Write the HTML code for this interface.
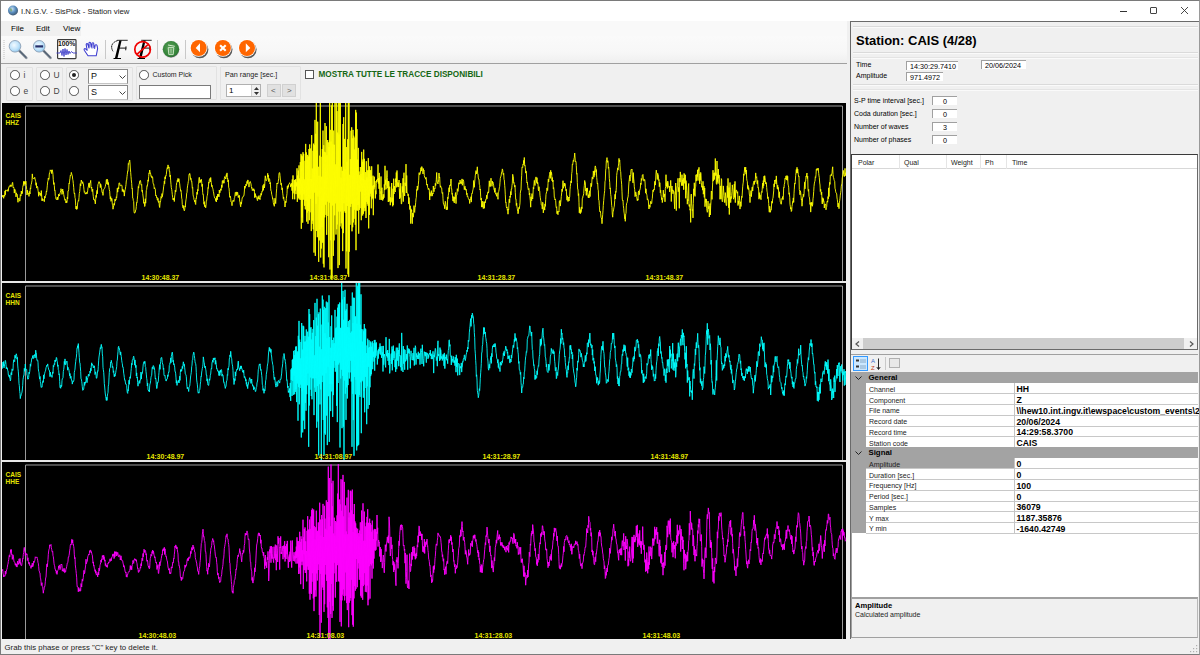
<!DOCTYPE html>
<html><head><meta charset="utf-8">
<style>
*{margin:0;padding:0;box-sizing:border-box}
html,body{width:1200px;height:655px;overflow:hidden;background:#f0f0f0;font-family:"Liberation Sans",sans-serif;color:#000}
.a{position:absolute}
.t{position:absolute;white-space:nowrap;line-height:1}
#win{position:absolute;left:0;top:0;width:1200px;height:655px;border:1px solid #7a7a7a;border-right-color:#9a9a9a;background:#f0f0f0;overflow:hidden}
#title{left:0;top:0;width:1198px;height:20px;background:#fff}
#menu{left:0;top:20px;width:846px;height:16px;background:linear-gradient(to right,#f0f0f0 0,#f0f0f0 80px,#f9f9f9 80px)}
#tool{left:0;top:35px;width:846px;height:28px;background:linear-gradient(#fafafa,#f7f7f7 60%,#efefef);border-bottom:1px solid #a0a0a0}
.sep{position:absolute;top:4px;width:1px;height:20px;background:#c8c8c8}
.grp{position:absolute;border:1px solid #e2e2e2;border-radius:1px}
.rad{position:absolute;width:9.5px;height:9.5px;border:1px solid #505050;border-radius:50%;background:#fff}
.combo{position:absolute;width:40px;height:15px;background:#fff;border:1px solid #7a7a7a}
.panel{position:absolute;left:1px;width:844px;background:#000;overflow:hidden}
.inner{position:absolute;left:24px;top:2px;width:820px;border:1px solid #a0a0a0;border-right-color:#c8c8c8}
.lbl{position:absolute;left:4px;font:bold 6.5px "Liberation Sans",sans-serif;color:#e6e600;line-height:7.5px}
.tm{position:absolute;font:bold 7px "Liberation Sans",sans-serif;color:#e6e600;white-space:nowrap}
#right{left:849px;top:20px;width:350px;height:618px;border-left:1px solid #6a6a6a;border-top:1px solid #6a6a6a;background:#f0f0f0}
.etch{position:absolute;left:2px;width:345px;border-top:1px solid #dadada;border-bottom:1px solid #fafafa}
.rl{position:absolute;font-size:8px;white-space:nowrap;line-height:1}
.box{position:absolute;background:#fff;border-left:1px solid #a0a0a0;border-top:1px solid #a0a0a0;font-size:8.5px;line-height:9px;padding-left:3px;white-space:nowrap}
#status{left:0;top:638px;width:1198px;height:15px;background:#f0f0f0}
</style></head><body>
<div id="win">
 <div id="title" class="a">
  <svg class="a" style="left:6px;top:4px" width="12" height="12" viewBox="0 0 12 12"><defs><radialGradient id="gl" cx="0.4" cy="0.35" r="0.7"><stop offset="0" stop-color="#cfe6f7"/><stop offset="0.5" stop-color="#5b8fc0"/><stop offset="1" stop-color="#3a4f66"/></radialGradient></defs><circle cx="6" cy="5.5" r="5" fill="url(#gl)"/><path d="M2.5 4 Q4 2.5 5 4 T4 7" fill="#6a9a4a" opacity="0.6"/></svg>
  <div class="t" style="left:20px;top:6.5px;font-size:7.8px;color:#222">I.N.G.V. - SisPick - Station view</div>
  <div class="a" style="left:1118.5px;top:9.5px;width:7px;height:1px;background:#333"></div>
  <div class="a" style="left:1149px;top:5.5px;width:7px;height:7px;border:1px solid #444;border-radius:1px"></div>
  <svg class="a" style="left:1179.5px;top:5.5px" width="7" height="7" viewBox="0 0 7 7"><path d="M0 0L7 7M7 0L0 7" stroke="#333" stroke-width="0.9"/></svg>
 </div>
 <div id="menu" class="a">
  <div class="t" style="left:10px;top:4px;font-size:8px">File</div>
  <div class="t" style="left:35px;top:4px;font-size:8px">Edit</div>
  <div class="t" style="left:62px;top:4px;font-size:8px">View</div>
 </div>
 <div id="tool" class="a">
  <svg class="a" style="left:-1px;top:0" width="270" height="27" viewBox="0 0 270 27">
   <defs>
    <radialGradient id="mg" cx="0.42" cy="0.4" r="0.65"><stop offset="0" stop-color="#f2faff"/><stop offset="0.6" stop-color="#bfe2fa"/><stop offset="1" stop-color="#8cc6ee"/></radialGradient>
    <radialGradient id="tg" cx="0.45" cy="0.4" r="0.62"><stop offset="0" stop-color="#5aa25a"/><stop offset="0.85" stop-color="#2f7f35"/><stop offset="1" stop-color="#4a4a52"/></radialGradient>
    <filter id="sh" x="-30%" y="-30%" width="160%" height="160%"><feGaussianBlur stdDeviation="0.6"/></filter>
   </defs>
   <g fill="#c0c0c0"><rect x="3.5" y="4" width="1" height="1"/><rect x="3.5" y="6" width="1" height="1"/><rect x="3.5" y="8" width="1" height="1"/><rect x="3.5" y="10" width="1" height="1"/><rect x="3.5" y="12" width="1" height="1"/><rect x="3.5" y="14" width="1" height="1"/><rect x="3.5" y="16" width="1" height="1"/><rect x="3.5" y="18" width="1" height="1"/><rect x="3.5" y="20" width="1" height="1"/><rect x="3.5" y="22" width="1" height="1"/></g>
   <line x1="19.2" y1="14.6" x2="26.3" y2="21.8" stroke="#8a929c" stroke-width="2.6" stroke-linecap="round"/>
   <line x1="19.6" y1="15" x2="26" y2="21.4" stroke="#4e5e70" stroke-width="1.1" stroke-linecap="round"/>
   <circle cx="15" cy="10.3" r="5.8" fill="url(#mg)" stroke="#8d9fb4" stroke-width="0.9"/>
   <line x1="43.4" y1="14.6" x2="50.5" y2="21.8" stroke="#8a929c" stroke-width="2.6" stroke-linecap="round"/>
   <line x1="43.8" y1="15" x2="50.2" y2="21.4" stroke="#4e5e70" stroke-width="1.1" stroke-linecap="round"/>
   <circle cx="39.2" cy="10.3" r="5.8" fill="url(#mg)" stroke="#8d9fb4" stroke-width="0.9"/>
   <rect x="35.3" y="9.3" width="7.8" height="2.2" fill="#26306a"/>
   <rect x="57.6" y="3.6" width="18.4" height="19" rx="0.8" fill="#fff" stroke="#3a3a3a" stroke-width="1.2"/>
   <text x="58" y="10.3" font-family="Liberation Sans" font-weight="bold" font-size="7" textLength="17.4" lengthAdjust="spacingAndGlyphs" fill="#111">100%</text>
   <path d="M56.5 17 L60 17 L61 14.5 L62 19.5 L63 13 L64 20.5 L65 12.5 L66 19 L67 13.5 L68 18.5 L69 15 L70 17.5 L71.5 15.5 L73 17 L77 17" stroke="#4040c8" stroke-width="0.9" fill="none"/>
   <path d="M88 19.8 L84.3 14.2 Q83.6 12.6 85.2 12.6 L87.2 14.3 L86.2 8.6 Q86.3 7.2 87.6 7.8 L88.8 11.4 L89 6.9 Q89.7 5.8 90.6 6.8 L91.2 11.2 L92.1 7.1 Q93 6.3 93.7 7.3 L93.9 11.8 L95.3 9 Q96.5 8.3 97.1 9.6 L97.6 12.6 L96.2 19.8 Z" fill="#fff" stroke="#3c3cd0" stroke-width="1.05" stroke-linejoin="round"/>
   <path d="M89 8.5 L89 12.5 M92 8 L92 12.5 M95 10 L94.6 13" stroke="#3c3cd0" stroke-width="0.9"/>
   <rect x="105" y="4" width="1" height="19" fill="#c8c8c8"/>
   <path d="M117.2 4.3 L127.7 4.3" stroke="#111" stroke-width="0.9"/>
   <path d="M117.6 4.6 C114 5.5 111 8.5 111.7 11.8 C111.9 13.5 112.6 14.8 113 15.3" stroke="#111" stroke-width="1" fill="none" stroke-dasharray="1.6 0.5"/>
   <path d="M121.6 4.4 L119.3 4.4 L114.8 22.4 L117.4 22.4 Z" fill="#000"/>
   <path d="M113.5 22.5 L121 22.5" stroke="#000" stroke-width="1"/>
   <path d="M118.8 12.1 L126.4 12.1 M126 10.4 L125.7 14.3" stroke="#111" stroke-width="1"/>
   <path d="M141.2 4.3 L151.7 4.3" stroke="#111" stroke-width="0.9"/>
   <path d="M145.6 4.4 L143.3 4.4 L138.8 22.4 L141.4 22.4 Z" fill="#000"/>
   <path d="M137.5 22.5 L145 22.5" stroke="#000" stroke-width="1"/>
   <path d="M142.8 12.1 L150.4 12.1 M150 10.4 L149.7 14.3" stroke="#111" stroke-width="1"/>
   <circle cx="142.6" cy="13.4" r="7.8" fill="none" stroke="#f00000" stroke-width="1.7"/>
   <path d="M137.2 18.2 L148 8.6" stroke="#f00000" stroke-width="1.7"/>
   <rect x="157" y="4" width="1" height="19" fill="#c8c8c8"/>
   <circle cx="171" cy="13.3" r="8.6" fill="#d8d8d8" filter="url(#sh)"/>
   <circle cx="171" cy="13.3" r="8.2" fill="url(#tg)"/>
   <path d="M168.2 11.6 L173.8 11.6 L173.2 18.6 L168.8 18.6 Z" fill="none" stroke="#d8ecd0" stroke-width="0.9"/>
   <path d="M170.2 12.6 V17.8 M171.8 12.6 V17.8" stroke="#d8ecd0" stroke-width="0.6"/>
   <path d="M168 9 L174.8 10.3" stroke="#d8ecd0" stroke-width="1"/>
   <rect x="185" y="4" width="1" height="19" fill="#c8c8c8"/>
   <g>
    <circle cx="199.8" cy="13.6" r="8.6" fill="#303030" filter="url(#sh)" opacity="0.8"/>
    <circle cx="198.7" cy="12" r="8.8" fill="#fff"/>
    <circle cx="198.7" cy="12" r="8" fill="#ff6600"/>
    <path d="M195.7 12 L200 7.2 L200 16.3 Z" fill="#fff"/>
    <circle cx="223.9" cy="13.6" r="8.6" fill="#303030" filter="url(#sh)" opacity="0.8"/>
    <circle cx="222.9" cy="12" r="8.8" fill="#fff"/>
    <circle cx="222.9" cy="12" r="8" fill="#ff6600"/>
    <path d="M220.1 9.2 L225.7 14.8 M225.7 9.2 L220.1 14.8" stroke="#fff" stroke-width="2.1"/>
    <circle cx="248" cy="13.6" r="8.6" fill="#303030" filter="url(#sh)" opacity="0.8"/>
    <circle cx="247" cy="12" r="8.8" fill="#fff"/>
    <circle cx="247" cy="12" r="8" fill="#ff6600"/>
    <path d="M250.3 12 L245.8 7.2 L245.8 16.3 Z" fill="#fff"/>
   </g>
  </svg>
 </div>
 <div id="opts" class="a" style="left:0;top:63px;width:849px;height:39px;background:#f0f0f0">
  
  <div class="grp" style="left:4.5px;top:2.5px;width:27px;height:34px"></div>
  <div class="grp" style="left:34.5px;top:2.5px;width:27px;height:34px"></div>
  <div class="grp" style="left:64.5px;top:2.5px;width:67px;height:34px"></div>
  <div class="grp" style="left:135px;top:2px;width:81px;height:34px"></div>
  <div class="grp" style="left:219px;top:2px;width:81px;height:34px"></div>
  <div class="rad" style="left:9px;top:6px"></div><div class="t" style="left:22.5px;top:7px;font-size:8.5px;color:#444">i</div>
  <div class="rad" style="left:9px;top:22px"></div><div class="t" style="left:22.5px;top:23px;font-size:8.5px;color:#444">e</div>
  <div class="rad" style="left:39px;top:6px"></div><div class="t" style="left:52.5px;top:7px;font-size:8.5px;color:#444">U</div>
  <div class="rad" style="left:39px;top:22px"></div><div class="t" style="left:52.5px;top:23px;font-size:8.5px;color:#444">D</div>
  <div class="rad" style="left:68px;top:6px"><div class="a" style="left:2px;top:2px;width:4px;height:4px;border-radius:50%;background:#222"></div></div>
  <div class="rad" style="left:68px;top:22px"></div>
  <div class="combo" style="left:87px;top:4.5px;border-color:#8a8a8a #8a8a8a #c4c4c4"><div class="t" style="left:2px;top:2px;font-size:9px;color:#111">P</div><svg class="a" style="left:30px;top:5px" width="7" height="4"><path d="M0.5 0.5L3.5 3.5L6.5 0.5" stroke="#444" fill="none"/></svg></div>
  <div class="combo" style="left:87px;top:20.5px;border-color:#8a8a8a #8a8a8a #c4c4c4"><div class="t" style="left:2px;top:2px;font-size:9px;color:#111">S</div><svg class="a" style="left:30px;top:5px" width="7" height="4"><path d="M0.5 0.5L3.5 3.5L6.5 0.5" stroke="#444" fill="none"/></svg></div>
  <div class="rad" style="left:138px;top:6px"></div><div class="t" style="left:151.5px;top:7px;font-size:7px;color:#222">Custom Pick</div>
  <div class="a" style="left:138px;top:21px;width:72px;height:14px;background:#fff;border:1px solid #7a7a7a"></div>
  <div class="t" style="left:224px;top:7px;font-size:7.2px;color:#222">Pan range [sec.]</div>
  <div class="a" style="left:225px;top:20px;width:35px;height:13px;background:#fff;border:1px solid #b0b0b0"><div class="t" style="left:2px;top:2px;font-size:8px">1</div><div class="a" style="left:24px;top:0;width:9px;height:11px;background:#f0f0f0;border-left:1px solid #d0d0d0"><svg class="a" style="left:1px;top:1px" width="7" height="10"><path d="M1 4L3.5 1L6 4Z M1 6L3.5 9L6 6Z" fill="#333"/></svg></div></div>
  <div class="a" style="left:266px;top:20px;width:14px;height:13px;background:#e1e1e1;border:1px solid #d0d0d0"><div class="t" style="left:3px;top:2px;font-size:8px;color:#555">&lt;</div></div>
  <div class="a" style="left:281px;top:20px;width:14px;height:13px;background:#e1e1e1;border:1px solid #d0d0d0"><div class="t" style="left:4px;top:2px;font-size:8px;color:#555">&gt;</div></div>
  <div class="a" style="left:304px;top:5.5px;width:9px;height:9px;background:#fff;border:1px solid #555"></div>
  <div class="t" style="left:317.5px;top:5.6px;font:bold 8.2px 'Liberation Sans',sans-serif;color:#156815">MOSTRA TUTTE LE TRACCE DISPONIBILI</div>

 </div>
 <div class="panel" style="top:102px;height:178px"><svg class="a" style="left:0;top:0" width="844" height="178" viewBox="0 0 844 178"><path d="M23.5 178 V3 H840.5 V178" stroke="#9a9a9a" stroke-width="1" fill="none"/><polyline points="0.0,92.1 0.3,93.7 0.7,94.1 1.0,92.1 1.3,94.1 1.7,95.3 2.0,92.7 2.3,92.0 2.7,93.3 3.0,87.9 3.3,91.8 3.7,86.9 4.0,87.3 4.3,87.8 4.7,87.5 5.0,87.8 5.3,87.7 5.7,86.6 6.0,88.4 6.3,87.9 6.7,84.4 7.0,83.7 7.3,84.2 7.7,83.4 8.0,82.4 8.3,81.8 8.7,83.6 9.0,82.5 9.3,82.4 9.7,83.4 10.0,82.0 10.3,79.7 10.7,79.3 11.0,83.3 11.3,85.0 11.7,84.3 12.0,85.3 12.3,90.1 12.7,86.1 13.0,87.7 13.3,87.5 13.7,88.7 14.0,93.9 14.3,89.9 14.7,90.9 15.0,91.9 15.3,91.6 15.7,97.5 16.0,99.3 16.3,96.3 16.7,96.2 17.0,94.9 17.3,97.1 17.7,98.2 18.0,97.8 18.3,91.6 18.7,92.8 19.0,93.1 19.3,88.0 19.7,91.0 20.0,89.2 20.3,90.4 20.7,84.5 21.0,82.9 21.3,81.9 21.7,78.3 22.0,82.6 22.3,78.8 22.7,80.6 23.0,78.3 23.3,81.1 23.7,78.5 24.0,78.2 24.3,82.7 24.7,86.7 25.0,92.0 25.3,87.1 25.7,90.5 26.0,90.8 26.3,90.7 26.7,90.2 27.0,93.4 27.3,88.4 27.7,89.0 28.0,91.0 28.3,84.9 28.7,85.7 29.0,81.5 29.3,81.3 29.7,79.1 30.0,77.6 30.3,70.9 30.7,74.9 31.0,75.1 31.3,75.9 31.7,75.5 32.0,75.5 32.3,75.6 32.7,74.3 33.0,75.6 33.3,77.1 33.7,78.6 34.0,82.3 34.3,79.8 34.7,85.1 35.0,83.7 35.3,83.3 35.7,84.2 36.0,87.3 36.3,88.8 36.7,93.3 37.0,88.9 37.3,90.8 37.7,91.1 38.0,91.9 38.3,90.2 38.7,91.9 39.0,93.2 39.3,87.6 39.7,93.0 40.0,97.8 40.3,95.5 40.7,97.5 41.0,96.8 41.3,96.5 41.7,97.1 42.0,96.8 42.3,98.7 42.7,93.2 43.0,95.1 43.3,93.6 43.7,92.2 44.0,92.1 44.3,88.2 44.7,88.9 45.0,86.0 45.3,82.8 45.7,78.6 46.0,78.0 46.3,75.0 46.7,76.3 47.0,76.4 47.3,71.0 47.7,69.6 48.0,68.8 48.3,66.9 48.7,67.5 49.0,67.6 49.3,66.9 49.7,70.6 50.0,67.1 50.3,66.8 50.7,69.1 51.0,71.8 51.3,76.7 51.7,81.4 52.0,79.6 52.3,82.4 52.7,87.9 53.0,87.5 53.3,92.6 53.7,93.6 54.0,96.3 54.3,96.2 54.7,96.1 55.0,96.8 55.3,94.0 55.7,96.6 56.0,96.7 56.3,94.2 56.7,91.1 57.0,92.2 57.3,93.0 57.7,91.9 58.0,90.0 58.3,89.6 58.7,87.5 59.0,85.7 59.3,87.0 59.7,88.2 60.0,91.4 60.3,89.8 60.7,86.0 61.0,88.7 61.3,88.3 61.7,91.4 62.0,93.1 62.3,94.3 62.7,95.9 63.0,97.4 63.3,96.3 63.7,97.2 64.0,100.0 64.3,97.9 64.7,99.6 65.0,99.6 65.3,94.2 65.7,95.8 66.0,88.0 66.3,88.0 66.7,86.5 67.0,80.4 67.3,81.0 67.7,77.1 68.0,75.3 68.3,72.4 68.7,73.0 69.0,71.6 69.3,69.4 69.7,70.9 70.0,72.1 70.3,72.6 70.7,76.3 71.0,77.7 71.3,80.4 71.7,84.4 72.0,88.6 72.3,90.9 72.7,90.2 73.0,94.7 73.3,95.7 73.7,102.5 74.0,106.0 74.3,103.2 74.7,106.5 75.0,104.8 75.3,105.5 75.7,99.8 76.0,98.9 76.3,97.5 76.7,98.1 77.0,94.5 77.3,90.4 77.7,88.5 78.0,85.2 78.3,80.7 78.7,83.0 79.0,79.9 79.3,77.0 79.7,78.9 80.0,79.5 80.3,80.6 80.7,78.7 81.0,80.3 81.3,80.5 81.7,83.9 82.0,86.8 82.3,89.3 82.7,88.6 83.0,89.9 83.3,91.1 83.7,90.1 84.0,91.1 84.3,89.3 84.7,90.1 85.0,90.9 85.3,90.1 85.7,87.8 86.0,84.7 86.3,84.1 86.7,80.8 87.0,79.9 87.3,84.7 87.7,80.0 88.0,79.7 88.3,79.7 88.7,77.4 89.0,83.8 89.3,85.2 89.7,84.0 90.0,88.6 90.3,88.4 90.7,86.1 91.0,91.0 91.3,93.4 91.7,96.8 92.0,96.4 92.3,96.3 92.7,97.9 93.0,98.0 93.3,100.9 93.7,96.3 94.0,92.3 94.3,94.4 94.7,88.7 95.0,87.3 95.3,90.8 95.7,83.7 96.0,81.4 96.3,80.8 96.7,79.1 97.0,78.6 97.3,78.9 97.7,80.3 98.0,80.1 98.3,84.6 98.7,81.2 99.0,82.2 99.3,84.3 99.7,86.0 100.0,89.0 100.3,89.8 100.7,89.3 101.0,92.4 101.3,86.9 101.7,86.7 102.0,85.9 102.3,85.6 102.7,85.3 103.0,84.2 103.3,83.4 103.7,81.2 104.0,81.0 104.3,76.6 104.7,76.6 105.0,81.1 105.3,76.3 105.7,77.3 106.0,81.8 106.3,79.5 106.7,82.3 107.0,84.8 107.3,86.7 107.7,88.3 108.0,93.2 108.3,96.1 108.7,93.6 109.0,98.3 109.3,97.4 109.7,95.3 110.0,96.2 110.3,101.2 110.7,102.1 111.0,106.2 111.3,104.8 111.7,102.7 112.0,100.5 112.3,102.2 112.7,99.7 113.0,96.1 113.3,98.0 113.7,96.4 114.0,96.9 114.3,93.8 114.7,94.7 115.0,90.7 115.3,85.2 115.7,89.1 116.0,86.4 116.3,84.4 116.7,86.0 117.0,79.9 117.3,79.9 117.7,80.1 118.0,82.6 118.3,82.8 118.7,82.4 119.0,81.8 119.3,82.0 119.7,82.5 120.0,82.6 120.3,88.5 120.7,86.1 121.0,86.8 121.3,86.8 121.7,89.2 122.0,87.5 122.3,93.1 122.7,89.2 123.0,87.5 123.3,86.3 123.7,83.7 124.0,81.5 124.3,77.8 124.7,76.9 125.0,73.7 125.3,71.3 125.7,68.0 126.0,68.3 126.3,60.6 126.7,61.4 127.0,59.4 127.3,58.4 127.7,57.0 128.0,60.0 128.3,65.0 128.7,69.6 129.0,73.5 129.3,76.8 129.7,80.6 130.0,85.7 130.3,85.2 130.7,95.0 131.0,95.1 131.3,97.5 131.7,98.6 132.0,108.1 132.3,110.0 132.7,110.2 133.0,109.1 133.3,109.1 133.7,106.9 134.0,106.8 134.3,103.4 134.7,99.2 135.0,99.6 135.3,96.3 135.7,92.2 136.0,88.1 136.3,83.5 136.7,85.1 137.0,81.2 137.3,81.1 137.7,78.2 138.0,78.6 138.3,77.4 138.7,78.7 139.0,81.6 139.3,82.2 139.7,81.4 140.0,88.5 140.3,87.1 140.7,90.5 141.0,93.0 141.3,95.0 141.7,100.2 142.0,100.4 142.3,99.2 142.7,103.5 143.0,102.7 143.3,95.8 143.7,100.2 144.0,94.4 144.3,87.6 144.7,86.3 145.0,82.8 145.3,83.2 145.7,80.8 146.0,76.9 146.3,78.3 146.7,73.6 147.0,69.9 147.3,70.6 147.7,67.0 148.0,69.0 148.3,69.4 148.7,71.1 149.0,73.3 149.3,72.8 149.7,74.4 150.0,75.1 150.3,73.6 150.7,74.7 151.0,79.6 151.3,80.9 151.7,81.0 152.0,83.4 152.3,85.9 152.7,84.7 153.0,85.7 153.3,86.1 153.7,92.7 154.0,92.0 154.3,92.8 154.7,94.8 155.0,94.1 155.3,97.1 155.7,97.2 156.0,95.3 156.3,99.2 156.7,99.5 157.0,97.8 157.3,103.0 157.7,104.5 158.0,100.9 158.3,99.3 158.7,97.4 159.0,93.6 159.3,94.1 159.7,95.2 160.0,90.6 160.3,93.7 160.7,91.6 161.0,89.0 161.3,87.1 161.7,83.2 162.0,81.9 162.3,78.2 162.7,80.7 163.0,73.8 163.3,76.0 163.7,72.8 164.0,73.1 164.3,71.5 164.7,67.9 165.0,65.7 165.3,64.5 165.7,65.8 166.0,61.9 166.3,63.9 166.7,65.1 167.0,63.9 167.3,68.4 167.7,68.2 168.0,73.8 168.3,72.1 168.7,77.9 169.0,81.5 169.3,84.6 169.7,86.4 170.0,88.7 170.3,91.6 170.7,94.5 171.0,96.7 171.3,95.8 171.7,96.8 172.0,95.0 172.3,98.5 172.7,92.9 173.0,91.3 173.3,87.1 173.7,89.0 174.0,87.9 174.3,82.7 174.7,79.8 175.0,79.3 175.3,77.3 175.7,78.7 176.0,75.4 176.3,78.6 176.7,76.2 177.0,75.8 177.3,78.9 177.7,80.8 178.0,84.1 178.3,85.4 178.7,88.2 179.0,87.5 179.3,89.7 179.7,95.2 180.0,96.3 180.3,101.6 180.7,103.7 181.0,104.8 181.3,102.5 181.7,106.1 182.0,105.9 182.3,107.8 182.7,106.5 183.0,102.8 183.3,104.1 183.7,99.0 184.0,96.7 184.3,95.2 184.7,90.1 185.0,89.4 185.3,85.2 185.7,82.2 186.0,80.7 186.3,78.6 186.7,77.2 187.0,71.7 187.3,72.0 187.7,70.4 188.0,71.4 188.3,73.9 188.7,76.5 189.0,75.4 189.3,78.3 189.7,78.0 190.0,81.0 190.3,85.2 190.7,84.5 191.0,91.2 191.3,93.2 191.7,94.2 192.0,96.6 192.3,97.1 192.7,98.8 193.0,97.1 193.3,100.3 193.7,101.5 194.0,95.5 194.3,95.9 194.7,92.3 195.0,89.1 195.3,91.3 195.7,86.4 196.0,87.8 196.3,81.4 196.7,80.2 197.0,75.1 197.3,74.3 197.7,77.0 198.0,79.9 198.3,77.1 198.7,78.8 199.0,77.2 199.3,76.2 199.7,78.9 200.0,83.5 200.3,81.2 200.7,89.6 201.0,91.9 201.3,91.6 201.7,98.6 202.0,101.3 202.3,98.6 202.7,103.7 203.0,102.1 203.3,103.1 203.7,104.8 204.0,102.5 204.3,97.5 204.7,97.6 205.0,93.7 205.3,92.5 205.7,90.1 206.0,84.6 206.3,85.4 206.7,79.2 207.0,80.2 207.3,76.7 207.7,76.2 208.0,75.4 208.3,78.9 208.7,74.5 209.0,77.9 209.3,79.7 209.7,83.6 210.0,82.2 210.3,84.1 210.7,85.2 211.0,86.4 211.3,88.3 211.7,90.0 212.0,92.4 212.3,93.5 212.7,94.9 213.0,95.2 213.3,95.6 213.7,97.7 214.0,95.3 214.3,99.0 214.7,93.3 215.0,94.6 215.3,96.8 215.7,91.1 216.0,93.6 216.3,92.1 216.7,91.2 217.0,93.8 217.3,87.0 217.7,90.1 218.0,89.5 218.3,87.6 218.7,85.8 219.0,87.5 219.3,85.7 219.7,81.9 220.0,84.5 220.3,77.7 220.7,77.6 221.0,80.3 221.3,77.9 221.7,77.4 222.0,80.2 222.3,75.7 222.7,73.7 223.0,73.7 223.3,74.6 223.7,76.0 224.0,73.3 224.3,71.6 224.7,73.7 225.0,69.9 225.3,76.1 225.7,75.3 226.0,78.9 226.3,76.9 226.7,84.6 227.0,84.8 227.3,88.3 227.7,94.2 228.0,94.4 228.3,93.2 228.7,95.2 229.0,99.0 229.3,99.2 229.7,99.3 230.0,102.7 230.3,98.8 230.7,97.8 231.0,97.8 231.3,97.1 231.7,98.6 232.0,98.5 232.3,95.2 232.7,94.4 233.0,92.0 233.3,89.2 233.7,89.5 234.0,92.9 234.3,91.5 234.7,88.9 235.0,91.8 235.3,89.1 235.7,89.6 236.0,92.6 236.3,94.6 236.7,92.7 237.0,93.9 237.3,92.3 237.7,98.6 238.0,99.5 238.3,101.9 238.7,103.8 239.0,98.8 239.3,101.2 239.7,98.7 240.0,96.3 240.3,94.5 240.7,94.5 241.0,94.1 241.3,93.0 241.7,93.0 242.0,92.1 242.3,89.0 242.7,83.0 243.0,85.4 243.3,84.5 243.7,82.8 244.0,81.1 244.3,82.8 244.7,81.8 245.0,78.4 245.3,80.6 245.7,77.1 246.0,76.9 246.3,78.3 246.7,79.6 247.0,84.1 247.3,79.7 247.7,79.9 248.0,78.7 248.3,78.5 248.7,79.9 249.0,80.9 249.3,83.4 249.7,85.3 250.0,84.7 250.3,87.6 250.7,87.0 251.0,86.0 251.3,87.1 251.7,85.7 252.0,88.0 252.3,86.8 252.7,94.7 253.0,92.2 253.3,90.6 253.7,93.7 254.0,92.8 254.3,94.8 254.7,95.1 255.0,95.0 255.3,97.6 255.7,97.4 256.0,93.6 256.3,95.9 256.7,93.6 257.0,92.6 257.3,95.9 257.7,95.0 258.0,96.7 258.3,92.8 258.7,93.4 259.0,90.3 259.3,92.2 259.7,90.2 260.0,88.1 260.3,88.5 260.7,86.0 261.0,82.4 261.3,87.4 261.7,83.4 262.0,80.9 262.3,85.0 262.7,83.0 263.0,75.7 263.3,72.8 263.7,75.8 264.0,77.8 264.3,77.7 264.7,77.0 265.0,76.2 265.3,74.9 265.7,70.3 266.0,74.0 266.3,72.1 266.7,78.6 267.0,75.5 267.3,75.7 267.7,76.6 268.0,81.0 268.3,79.5 268.7,85.8 269.0,88.0 269.3,88.3 269.7,91.4 270.0,92.5 270.3,93.7 270.7,96.2 271.0,95.6 271.3,99.7 271.7,101.6 272.0,101.5 272.3,103.3 272.7,98.9 273.0,95.2 273.3,97.9 273.7,100.6 274.0,95.2 274.3,90.1 274.7,85.3 275.0,80.0 275.3,81.0 275.7,80.0 276.0,80.4 276.3,78.3 276.7,75.4 277.0,70.5 277.3,69.6 277.7,69.7 278.0,72.5 278.3,76.0 278.7,79.0 279.0,81.8 279.3,80.2 279.7,83.4 280.0,86.9 280.3,84.9 280.7,90.2 281.0,92.2 281.3,95.6 281.7,94.1 282.0,96.9 282.3,97.9 282.7,98.6 283.0,104.0 283.3,100.8 283.7,98.2 284.0,99.6 284.3,95.7 284.7,92.9 285.0,90.5 285.3,83.3 285.7,85.9 286.0,82.5 286.3,84.3 286.7,81.4 287.0,81.3 287.3,80.7 287.7,79.7 288.0,80.9 288.3,81.2 288.7,84.1 289.0,81.6 289.3,82.8 289.7,80.2 290.0,87.7 290.3,76.4 290.7,96.2 291.0,72.4 291.3,83.2 291.7,82.8 292.0,90.4 292.3,76.9 292.7,96.3 293.0,77.1 293.3,87.5 293.7,76.2 294.0,91.1 294.3,79.3 294.7,83.4 295.0,65.3 295.3,98.9 295.7,72.5 296.0,93.8 296.3,67.6 296.7,95.3 297.0,62.4 297.3,96.5 297.7,75.5 298.0,91.6 298.3,59.1 298.7,96.8 299.0,50.9 299.3,125.8 299.7,52.4 300.0,114.6 300.3,53.4 300.7,119.7 301.0,49.2 301.3,96.7 301.7,50.9 302.0,91.3 302.3,76.4 302.7,102.8 303.0,57.8 303.3,106.4 303.7,40.9 304.0,97.7 304.3,49.4 304.7,118.6 305.0,56.9 305.3,109.5 305.7,51.9 306.0,120.8 306.3,53.5 306.7,108.0 307.0,46.0 307.3,117.2 307.7,41.4 308.0,109.3 308.3,45.5 308.7,95.8 309.0,76.0 309.3,128.1 309.7,32.1 310.0,120.9 310.3,65.5 310.7,117.7 311.0,47.8 311.3,126.3 311.7,40.6 312.0,149.6 312.3,42.2 312.7,89.6 313.0,16.9 313.3,152.9 313.7,30.8 314.0,100.8 314.3,-1.6 314.7,128.0 315.0,47.5 315.3,134.2 315.7,18.7 316.0,93.5 316.3,63.8 316.7,158.9 317.0,72.8 317.3,137.4 317.7,52.7 318.0,126.5 318.3,-2.0 318.7,154.5 319.0,53.8 319.3,145.5 319.7,73.7 320.0,124.2 320.3,46.0 320.7,139.7 321.0,27.6 321.3,160.7 321.7,42.2 322.0,164.4 322.3,48.8 322.7,114.4 323.0,20.0 323.3,101.7 323.7,49.4 324.0,111.9 324.3,23.2 324.7,131.8 325.0,52.2 325.3,98.6 325.7,37.0 326.0,113.0 326.3,39.4 326.7,154.2 327.0,44.0 327.3,99.7 327.7,-2.0 328.0,166.5 328.3,26.9 328.7,137.3 329.0,38.5 329.3,176.1 329.7,2.4 330.0,175.1 330.3,-2.0 330.7,102.5 331.0,41.5 331.3,152.9 331.7,27.6 332.0,137.4 332.3,41.8 332.7,112.3 333.0,-2.0 333.3,100.4 333.7,61.4 334.0,131.5 334.3,-2.0 334.7,126.2 335.0,8.1 335.3,121.4 335.7,29.6 336.0,165.1 336.3,-2.0 336.7,108.5 337.0,31.5 337.3,162.1 337.7,-2.0 338.0,123.4 338.3,-2.0 338.7,108.5 339.0,74.7 339.3,120.3 339.7,63.8 340.0,125.5 340.3,67.9 340.7,148.1 341.0,21.0 341.3,130.1 341.7,14.2 342.0,100.3 342.3,35.9 342.7,108.3 343.0,66.2 343.3,110.0 343.7,-2.0 344.0,165.5 344.3,44.1 344.7,148.3 345.0,58.8 345.3,102.9 345.7,36.3 346.0,171.3 346.3,-2.0 346.7,173.9 347.0,-2.0 347.3,148.7 347.7,71.8 348.0,121.8 348.3,56.2 348.7,103.8 349.0,27.7 349.3,100.8 349.7,24.3 350.0,128.3 350.3,35.3 350.7,124.3 351.0,26.9 351.3,119.4 351.7,32.7 352.0,115.8 352.3,46.5 352.7,106.8 353.0,34.5 353.3,121.8 353.7,6.9 354.0,147.2 354.3,9.6 354.7,107.3 355.0,26.2 355.3,107.6 355.7,56.6 356.0,102.0 356.3,44.9 356.7,130.7 357.0,68.5 357.3,106.9 357.7,72.1 358.0,105.1 358.3,64.0 358.7,88.6 359.0,71.0 359.3,117.2 359.7,48.9 360.0,106.2 360.3,58.8 360.7,112.5 361.0,56.5 361.3,110.8 361.7,46.6 362.0,108.3 362.3,55.8 362.7,104.8 363.0,76.8 363.3,107.8 363.7,69.1 364.0,115.0 364.3,58.2 364.7,98.8 365.0,74.5 365.3,100.9 365.7,67.3 366.0,102.7 366.3,55.1 366.7,125.4 367.0,66.9 367.3,111.9 367.7,63.3 368.0,93.5 368.3,67.2 368.7,90.7 369.0,73.8 369.3,105.3 369.7,63.3 370.0,96.3 370.3,82.8 370.7,94.9 371.0,72.7 371.3,112.2 371.7,82.2 372.0,86.3 372.3,73.7 372.7,84.3 373.0,78.1 373.3,95.4 373.7,87.6 374.0,91.2 374.3,80.4 374.7,76.9 375.0,78.8 375.3,76.0 375.7,76.9 376.0,61.5 376.3,80.5 376.7,75.0 377.0,85.8 377.3,69.9 377.7,91.7 378.0,96.8 378.3,91.9 378.7,87.7 379.0,73.5 379.3,96.9 379.7,86.2 380.0,84.7 380.3,90.6 380.7,97.5 381.0,94.2 381.3,96.1 381.7,91.3 382.0,94.7 382.3,81.4 382.7,87.1 383.0,62.8 383.3,81.6 383.7,76.8 384.0,86.3 384.3,83.5 384.7,73.0 385.0,67.5 385.3,74.5 385.7,85.1 386.0,78.0 386.3,99.0 386.7,78.2 387.0,80.1 387.3,98.4 387.7,83.7 388.0,93.2 388.3,102.2 388.7,94.4 389.0,99.4 389.3,94.2 389.7,80.0 390.0,98.5 390.3,94.8 390.7,103.3 391.0,85.7 391.3,102.1 391.7,75.7 392.0,91.0 392.3,83.0 392.7,87.2 393.0,88.0 393.3,89.0 393.7,75.6 394.0,79.0 394.3,69.5 394.7,84.4 395.0,67.5 395.3,78.4 395.7,83.4 396.0,83.9 396.3,79.7 396.7,84.0 397.0,77.0 397.3,86.6 397.7,95.9 398.0,85.9 398.3,94.7 398.7,80.2 399.0,94.6 399.3,101.0 399.7,100.8 400.0,91.7 400.3,83.4 400.7,89.3 401.0,75.3 401.3,98.6 401.7,74.7 402.0,69.7 402.3,89.8 402.7,93.0 403.0,79.8 403.3,81.6 403.7,82.8 404.0,61.1 404.3,89.9 404.7,72.5 405.0,90.1 405.3,89.9 405.7,90.3 406.0,92.8 406.3,91.2 406.7,100.9 407.0,94.5 407.3,97.8 407.7,106.4 408.0,106.2 408.3,102.8 408.7,120.6 409.0,105.8 409.3,108.5 409.7,107.0 410.0,117.9 410.3,120.7 410.7,109.9 411.0,114.0 411.3,114.1 411.7,110.0 412.0,102.6 412.3,109.0 412.7,109.4 413.0,104.4 413.3,104.2 413.7,99.3 414.0,95.8 414.3,94.6 414.7,86.5 415.0,87.6 415.3,83.0 415.7,86.9 416.0,85.0 416.3,81.8 416.7,77.2 417.0,69.7 417.3,69.7 417.7,71.8 418.0,70.7 418.3,70.6 418.7,66.3 419.0,64.6 419.3,68.1 419.7,63.7 420.0,63.6 420.3,65.9 420.7,66.1 421.0,71.0 421.3,65.5 421.7,67.4 422.0,67.0 422.3,72.5 422.7,74.1 423.0,74.8 423.3,75.1 423.7,76.2 424.0,74.3 424.3,75.7 424.7,82.0 425.0,82.1 425.3,81.1 425.7,84.6 426.0,85.0 426.3,86.5 426.7,85.2 427.0,86.8 427.3,86.6 427.7,97.0 428.0,89.5 428.3,92.0 428.7,91.7 429.0,93.2 429.3,87.6 429.7,91.0 430.0,92.8 430.3,93.1 430.7,90.1 431.0,91.0 431.3,83.0 431.7,86.4 432.0,88.7 432.3,85.8 432.7,85.2 433.0,85.8 433.3,80.4 433.7,82.6 434.0,80.3 434.3,76.7 434.7,69.5 435.0,78.1 435.3,79.1 435.7,80.4 436.0,81.0 436.3,77.6 436.7,78.4 437.0,70.0 437.3,74.9 437.7,74.1 438.0,81.1 438.3,84.2 438.7,82.9 439.0,84.3 439.3,85.0 439.7,84.9 440.0,90.1 440.3,90.5 440.7,89.5 441.0,95.8 441.3,100.0 441.7,101.5 442.0,102.2 442.3,101.9 442.7,105.8 443.0,101.4 443.3,98.3 443.7,99.8 444.0,103.9 444.3,106.6 444.7,107.0 445.0,103.7 445.3,106.6 445.7,94.2 446.0,95.7 446.3,92.3 446.7,90.0 447.0,84.7 447.3,88.9 447.7,82.2 448.0,82.1 448.3,82.9 448.7,80.6 449.0,76.0 449.3,85.9 449.7,85.7 450.0,91.3 450.3,90.3 450.7,95.7 451.0,98.1 451.3,93.6 451.7,98.4 452.0,98.5 452.3,99.9 452.7,93.9 453.0,96.2 453.3,90.9 453.7,89.5 454.0,100.6 454.3,92.3 454.7,92.3 455.0,91.4 455.3,85.7 455.7,87.6 456.0,88.4 456.3,86.1 456.7,79.9 457.0,79.7 457.3,80.2 457.7,81.2 458.0,77.0 458.3,78.3 458.7,80.5 459.0,78.6 459.3,80.3 459.7,80.7 460.0,75.9 460.3,82.3 460.7,80.7 461.0,76.6 461.3,77.0 461.7,78.3 462.0,82.9 462.3,86.7 462.7,83.9 463.0,83.2 463.3,84.5 463.7,87.2 464.0,86.0 464.3,86.8 464.7,91.7 465.0,90.2 465.3,93.5 465.7,92.9 466.0,94.2 466.3,95.6 466.7,95.8 467.0,96.6 467.3,96.2 467.7,100.5 468.0,97.6 468.3,96.4 468.7,96.5 469.0,93.7 469.3,99.1 469.7,91.1 470.0,90.0 470.3,90.4 470.7,88.0 471.0,86.6 471.3,85.1 471.7,77.5 472.0,80.8 472.3,84.3 472.7,78.9 473.0,75.8 473.3,72.2 473.7,70.1 474.0,67.6 474.3,71.0 474.7,68.5 475.0,67.3 475.3,63.8 475.7,70.8 476.0,70.9 476.3,75.0 476.7,76.3 477.0,76.2 477.3,81.3 477.7,82.3 478.0,87.0 478.3,86.0 478.7,93.9 479.0,97.1 479.3,95.1 479.7,104.1 480.0,101.5 480.3,104.1 480.7,98.1 481.0,102.4 481.3,105.6 481.7,104.2 482.0,98.8 482.3,105.3 482.7,98.7 483.0,99.5 483.3,99.9 483.7,96.6 484.0,96.8 484.3,95.9 484.7,92.1 485.0,95.8 485.3,92.1 485.7,89.8 486.0,88.8 486.3,90.1 486.7,89.1 487.0,82.9 487.3,77.8 487.7,83.4 488.0,82.5 488.3,83.5 488.7,79.2 489.0,75.2 489.3,79.8 489.7,80.3 490.0,83.3 490.3,78.1 490.7,80.5 491.0,79.3 491.3,80.7 491.7,82.8 492.0,86.7 492.3,86.5 492.7,89.3 493.0,84.9 493.3,89.5 493.7,91.0 494.0,91.1 494.3,92.1 494.7,93.2 495.0,89.7 495.3,93.9 495.7,94.4 496.0,96.3 496.3,89.8 496.7,88.6 497.0,87.0 497.3,84.9 497.7,83.3 498.0,79.3 498.3,75.4 498.7,73.6 499.0,73.5 499.3,71.1 499.7,69.1 500.0,69.0 500.3,65.9 500.7,66.9 501.0,70.4 501.3,71.6 501.7,70.3 502.0,76.3 502.3,76.9 502.7,82.3 503.0,85.9 503.3,91.8 503.7,99.6 504.0,99.1 504.3,103.6 504.7,105.0 505.0,103.8 505.3,107.2 505.7,106.2 506.0,111.2 506.3,106.2 506.7,106.9 507.0,98.1 507.3,96.0 507.7,99.7 508.0,93.0 508.3,94.4 508.7,88.5 509.0,92.0 509.3,85.9 509.7,86.2 510.0,82.3 510.3,80.3 510.7,71.3 511.0,73.1 511.3,73.9 511.7,80.2 512.0,79.6 512.3,81.8 512.7,84.1 513.0,82.3 513.3,89.7 513.7,96.1 514.0,96.0 514.3,102.5 514.7,100.2 515.0,104.0 515.3,105.6 515.7,108.5 516.0,110.8 516.3,110.1 516.7,104.8 517.0,104.3 517.3,105.7 517.7,102.6 518.0,99.9 518.3,90.4 518.7,87.3 519.0,87.4 519.3,78.9 519.7,72.3 520.0,64.2 520.3,63.9 520.7,64.6 521.0,61.2 521.3,61.8 521.7,57.4 522.0,60.4 522.3,54.5 522.7,62.8 523.0,62.3 523.3,64.7 523.7,70.1 524.0,68.3 524.3,68.2 524.7,76.7 525.0,79.9 525.3,79.2 525.7,82.5 526.0,85.2 526.3,86.7 526.7,85.6 527.0,85.4 527.3,91.9 527.7,90.0 528.0,95.2 528.3,97.5 528.7,104.2 529.0,93.8 529.3,96.2 529.7,97.7 530.0,90.6 530.3,94.6 530.7,96.0 531.0,91.5 531.3,84.4 531.7,86.0 532.0,80.9 532.3,77.4 532.7,80.0 533.0,82.5 533.3,75.7 533.7,75.7 534.0,73.9 534.3,76.8 534.7,79.7 535.0,74.7 535.3,80.9 535.7,79.2 536.0,81.1 536.3,86.5 536.7,87.9 537.0,83.7 537.3,87.5 537.7,87.9 538.0,92.8 538.3,94.4 538.7,97.6 539.0,98.6 539.3,102.0 539.7,102.5 540.0,103.2 540.3,106.1 540.7,99.2 541.0,100.3 541.3,109.9 541.7,106.2 542.0,104.4 542.3,103.6 542.7,107.1 543.0,100.9 543.3,103.4 543.7,96.7 544.0,91.4 544.3,90.0 544.7,88.8 545.0,84.9 545.3,87.4 545.7,87.5 546.0,80.6 546.3,76.1 546.7,79.0 547.0,75.7 547.3,72.9 547.7,71.4 548.0,69.1 548.3,75.4 548.7,67.3 549.0,71.8 549.3,69.2 549.7,70.9 550.0,77.8 550.3,74.5 550.7,78.9 551.0,77.1 551.3,85.7 551.7,84.6 552.0,87.2 552.3,94.5 552.7,94.4 553.0,97.0 553.3,96.2 553.7,97.7 554.0,103.4 554.3,104.7 554.7,103.7 555.0,110.7 555.3,108.2 555.7,110.8 556.0,111.7 556.3,108.4 556.7,108.0 557.0,108.8 557.3,98.6 557.7,99.5 558.0,97.3 558.3,103.1 558.7,99.6 559.0,97.0 559.3,93.5 559.7,89.9 560.0,86.0 560.3,88.5 560.7,84.9 561.0,77.7 561.3,85.3 561.7,84.1 562.0,82.0 562.3,80.0 562.7,83.1 563.0,80.5 563.3,82.9 563.7,85.8 564.0,87.8 564.3,86.3 564.7,93.5 565.0,97.2 565.3,92.8 565.7,94.9 566.0,98.5 566.3,95.5 566.7,94.1 567.0,98.0 567.3,95.5 567.7,93.8 568.0,86.8 568.3,83.7 568.7,80.3 569.0,77.9 569.3,79.9 569.7,70.6 570.0,68.8 570.3,61.4 570.7,61.9 571.0,59.2 571.3,57.3 571.7,58.4 572.0,55.6 572.3,54.7 572.7,50.0 573.0,53.9 573.3,58.7 573.7,58.1 574.0,58.9 574.3,62.7 574.7,71.2 575.0,70.5 575.3,79.4 575.7,86.2 576.0,86.2 576.3,92.5 576.7,90.7 577.0,99.8 577.3,109.8 577.7,104.3 578.0,105.8 578.3,110.7 578.7,106.7 579.0,109.5 579.3,108.3 579.7,103.9 580.0,105.7 580.3,95.2 580.7,95.1 581.0,92.7 581.3,92.6 581.7,90.7 582.0,85.9 582.3,82.8 582.7,77.5 583.0,79.5 583.3,79.5 583.7,87.9 584.0,86.4 584.3,92.4 584.7,85.1 585.0,88.2 585.3,84.9 585.7,89.4 586.0,93.5 586.3,94.7 586.7,91.7 587.0,95.0 587.3,90.1 587.7,87.8 588.0,93.6 588.3,88.1 588.7,84.1 589.0,80.2 589.3,83.6 589.7,82.1 590.0,75.7 590.3,73.9 590.7,76.0 591.0,76.1 591.3,68.1 591.7,70.8 592.0,74.2 592.3,67.7 592.7,72.3 593.0,64.2 593.3,62.9 593.7,64.3 594.0,69.3 594.3,66.6 594.7,74.4 595.0,77.4 595.3,81.0 595.7,80.2 596.0,86.2 596.3,87.2 596.7,97.0 597.0,97.2 597.3,102.5 597.7,108.0 598.0,108.9 598.3,108.2 598.7,110.8 599.0,114.2 599.3,115.0 599.7,116.0 600.0,120.7 600.3,116.3 600.7,111.6 601.0,107.4 601.3,102.4 601.7,97.5 602.0,93.9 602.3,90.8 602.7,87.6 603.0,78.7 603.3,77.4 603.7,67.1 604.0,65.3 604.3,58.0 604.7,56.7 605.0,54.6 605.3,59.4 605.7,57.8 606.0,57.7 606.3,65.3 606.7,64.0 607.0,67.7 607.3,75.3 607.7,79.3 608.0,85.8 608.3,84.9 608.7,91.5 609.0,93.3 609.3,96.9 609.7,102.7 610.0,104.4 610.3,111.2 610.7,114.2 611.0,109.5 611.3,108.4 611.7,106.1 612.0,104.4 612.3,103.2 612.7,97.6 613.0,91.3 613.3,96.0 613.7,88.4 614.0,89.3 614.3,84.8 614.7,72.4 615.0,69.7 615.3,67.9 615.7,64.9 616.0,67.1 616.3,63.7 616.7,60.1 617.0,55.4 617.3,58.6 617.7,57.0 618.0,62.3 618.3,68.1 618.7,68.4 619.0,74.8 619.3,77.3 619.7,81.8 620.0,88.8 620.3,96.1 620.7,97.8 621.0,97.4 621.3,102.6 621.7,105.3 622.0,109.1 622.3,110.9 622.7,115.6 623.0,114.6 623.3,118.3 623.7,110.9 624.0,110.3 624.3,102.8 624.7,100.2 625.0,99.7 625.3,98.6 625.7,94.6 626.0,94.6 626.3,91.5 626.7,83.0 627.0,78.8 627.3,76.4 627.7,72.4 628.0,78.1 628.3,73.3 628.7,71.3 629.0,67.0 629.3,66.2 629.7,66.7 630.0,66.0 630.3,74.5 630.7,74.6 631.0,79.9 631.3,69.6 631.7,76.0 632.0,78.6 632.3,83.8 632.7,86.6 633.0,93.7 633.3,93.3 633.7,88.9 634.0,90.1 634.3,91.5 634.7,93.7 635.0,96.1 635.3,97.7 635.7,95.9 636.0,97.2 636.3,89.5 636.7,87.9 637.0,91.7 637.3,91.7 637.7,86.8 638.0,86.8 638.3,85.3 638.7,80.0 639.0,81.6 639.3,75.5 639.7,77.5 640.0,77.1 640.3,72.0 640.7,72.0 641.0,71.5 641.3,76.0 641.7,76.9 642.0,78.2 642.3,76.5 642.7,76.4 643.0,78.3 643.3,84.7 643.7,90.2 644.0,85.8 644.3,89.7 644.7,91.2 645.0,92.6 645.3,96.7 645.7,95.8 646.0,97.4 646.3,97.2 646.7,103.1 647.0,106.0 647.3,101.9 647.7,103.2 648.0,104.3 648.3,101.3 648.7,98.3 649.0,99.3 649.3,100.6 649.7,100.6 650.0,96.8 650.3,95.5 650.7,90.1 651.0,87.1 651.3,88.6 651.7,86.3 652.0,87.1 652.3,86.9 652.7,78.4 653.0,79.8 653.3,82.1 653.7,76.0 654.0,70.0 654.3,67.1 654.7,70.4 655.0,71.0 655.3,76.5 655.7,70.3 656.0,71.5 656.3,72.0 656.7,77.5 657.0,76.6 657.3,83.7 657.7,79.5 658.0,80.3 658.3,89.7 658.7,87.1 659.0,91.9 659.3,93.4 659.7,96.7 660.0,94.9 660.3,99.6 660.7,96.7 661.0,94.6 661.3,87.1 661.7,94.0 662.0,94.1 662.3,93.6 662.7,90.9 663.0,98.8 663.3,85.7 663.7,83.3 664.0,71.7 664.3,81.9 664.7,83.5 665.0,79.5 665.3,85.5 665.7,78.1 666.0,79.2 666.3,82.9 666.7,83.0 667.0,84.5 667.3,83.2 667.7,88.9 668.0,84.2 668.3,84.4 668.7,77.4 669.0,84.1 669.3,98.5 669.7,84.7 670.0,83.0 670.3,88.1 670.7,86.8 671.0,90.8 671.3,87.5 671.7,88.5 672.0,88.6 672.3,99.0 672.7,105.8 673.0,92.5 673.3,91.1 673.7,80.0 674.0,94.0 674.3,107.6 674.7,89.9 675.0,85.1 675.3,83.1 675.7,82.8 676.0,75.3 676.3,88.7 676.7,84.4 677.0,87.2 677.3,105.3 677.7,75.1 678.0,78.9 678.3,68.9 678.7,74.4 679.0,79.1 679.3,79.8 679.7,82.6 680.0,71.7 680.3,82.6 680.7,77.1 681.0,78.1 681.3,75.3 681.7,86.7 682.0,70.4 682.3,70.8 682.7,80.1 683.0,80.5 683.3,71.8 683.7,95.3 684.0,77.6 684.3,79.9 684.7,87.8 685.0,92.3 685.3,101.2 685.7,96.2 686.0,97.8 686.3,83.9 686.7,80.5 687.0,102.8 687.3,103.5 687.7,101.5 688.0,107.2 688.3,105.9 688.7,119.4 689.0,93.1 689.3,91.0 689.7,100.9 690.0,103.1 690.3,107.5 690.7,106.5 691.0,114.9 691.3,100.7 691.7,85.8 692.0,92.1 692.3,79.8 692.7,89.3 693.0,93.4 693.3,83.8 693.7,83.7 694.0,71.8 694.3,78.1 694.7,74.0 695.0,71.2 695.3,73.5 695.7,66.9 696.0,77.6 696.3,66.4 696.7,67.4 697.0,64.3 697.3,72.4 697.7,81.0 698.0,71.0 698.3,77.5 698.7,69.4 699.0,72.2 699.3,79.3 699.7,84.1 700.0,84.4 700.3,83.0 700.7,87.2 701.0,78.3 701.3,91.2 701.7,87.6 702.0,83.1 702.3,94.4 702.7,85.0 703.0,103.7 703.3,97.8 703.7,95.8 704.0,99.6 704.3,96.2 704.7,105.5 705.0,107.9 705.3,109.3 705.7,108.1 706.0,98.1 706.3,105.9 706.7,105.6 707.0,103.2 707.3,114.0 707.7,109.2 708.0,100.5 708.3,112.0 708.7,102.7 709.0,98.3 709.3,88.0 709.7,89.0 710.0,96.4 710.3,87.8 710.7,79.2 711.0,67.2 711.3,78.1 711.7,74.1 712.0,70.0 712.3,76.6 712.7,69.7 713.0,71.5 713.3,55.5 713.7,72.6 714.0,69.8 714.3,80.4 714.7,81.4 715.0,58.0 715.3,78.7 715.7,71.8 716.0,80.6 716.3,66.1 716.7,75.3 717.0,71.9 717.3,72.9 717.7,82.3 718.0,96.3 718.3,91.4 718.7,82.9 719.0,96.1 719.3,75.6 719.7,76.9 720.0,96.8 720.3,98.9 720.7,98.5 721.0,89.0 721.3,82.9 721.7,88.0 722.0,92.6 722.3,95.5 722.7,99.6 723.0,97.7 723.3,89.6 723.7,93.9 724.0,100.6 724.3,102.6 724.7,102.5 725.0,90.9 725.3,82.8 725.7,94.6 726.0,75.4 726.3,87.6 726.7,104.8 727.0,84.6 727.3,111.5 727.7,86.9 728.0,79.5 728.3,92.4 728.7,99.6 729.0,94.3 729.3,95.6 729.7,92.2 730.0,88.6 730.3,81.9 730.7,84.7 731.0,87.0 731.3,94.9 731.7,96.2 732.0,94.2 732.3,81.1 732.7,94.4 733.0,78.4 733.3,99.6 733.7,89.5 734.0,88.0 734.3,86.9 734.7,87.7 735.0,89.9 735.3,90.3 735.7,88.7 736.0,102.5 736.3,98.1 736.7,100.7 737.0,96.5 737.3,92.9 737.7,97.7 738.0,106.1 738.3,100.5 738.7,98.8 739.0,103.5 739.3,97.9 739.7,93.3 740.0,94.5 740.3,90.0 740.7,83.8 741.0,80.9 741.3,79.2 741.7,70.9 742.0,72.4 742.3,68.9 742.7,64.2 743.0,65.9 743.3,69.1 743.7,64.1 744.0,71.2 744.3,67.0 744.7,75.8 745.0,77.7 745.3,78.4 745.7,85.6 746.0,82.4 746.3,86.7 746.7,84.7 747.0,86.7 747.3,91.0 747.7,93.5 748.0,99.6 748.3,93.3 748.7,92.1 749.0,87.6 749.3,93.7 749.7,89.8 750.0,85.1 750.3,83.9 750.7,88.0 751.0,84.0 751.3,80.3 751.7,80.3 752.0,78.1 752.3,81.5 752.7,77.9 753.0,79.2 753.3,76.9 753.7,69.9 754.0,74.3 754.3,74.6 754.7,73.7 755.0,80.1 755.3,81.1 755.7,77.5 756.0,84.9 756.3,84.4 756.7,87.0 757.0,96.2 757.3,89.6 757.7,94.9 758.0,91.8 758.3,94.4 758.7,95.0 759.0,96.7 759.3,89.6 759.7,88.5 760.0,89.5 760.3,84.7 760.7,80.0 761.0,85.3 761.3,77.6 761.7,82.7 762.0,73.2 762.3,78.8 762.7,72.7 763.0,74.8 763.3,77.2 763.7,81.0 764.0,79.7 764.3,79.6 764.7,84.5 765.0,88.2 765.3,89.5 765.7,95.6 766.0,93.8 766.3,95.1 766.7,100.5 767.0,106.3 767.3,109.2 767.7,103.2 768.0,105.3 768.3,109.3 768.7,108.0 769.0,106.3 769.3,106.7 769.7,98.6 770.0,98.1 770.3,100.2 770.7,95.7 771.0,95.1 771.3,92.0 771.7,87.9 772.0,80.8 772.3,83.9 772.7,77.0 773.0,78.4 773.3,78.0 773.7,76.7 774.0,80.9 774.3,72.9 774.7,79.2 775.0,82.9 775.3,85.8 775.7,82.2 776.0,86.4 776.3,84.4 776.7,89.4 777.0,94.6 777.3,88.8 777.7,95.0 778.0,95.9 778.3,98.9 778.7,99.8 779.0,101.3 779.3,101.1 779.7,97.6 780.0,95.4 780.3,95.9 780.7,93.5 781.0,96.7 781.3,94.6 781.7,84.6 782.0,85.0 782.3,81.4 782.7,80.0 783.0,75.2 783.3,75.5 783.7,76.2 784.0,72.9 784.3,76.0 784.7,76.9 785.0,72.5 785.3,77.3 785.7,73.3 786.0,81.1 786.3,82.2 786.7,84.2 787.0,91.3 787.3,89.8 787.7,94.3 788.0,101.3 788.3,103.2 788.7,106.1 789.0,104.6 789.3,108.5 789.7,108.0 790.0,103.3 790.3,101.8 790.7,98.5 791.0,99.4 791.3,94.9 791.7,99.3 792.0,90.7 792.3,86.2 792.7,80.2 793.0,81.1 793.3,78.3 793.7,72.3 794.0,69.4 794.3,66.5 794.7,70.1 795.0,64.3 795.3,70.0 795.7,66.0 796.0,68.7 796.3,71.7 796.7,73.8 797.0,73.3 797.3,86.5 797.7,88.7 798.0,91.8 798.3,87.7 798.7,89.4 799.0,92.9 799.3,96.7 799.7,95.9 800.0,103.2 800.3,99.3 800.7,94.3 801.0,94.5 801.3,91.1 801.7,93.6 802.0,91.0 802.3,84.7 802.7,79.2 803.0,85.8 803.3,77.9 803.7,78.2 804.0,73.4 804.3,74.0 804.7,71.1 805.0,70.0 805.3,75.5 805.7,73.2 806.0,86.1 806.3,88.3 806.7,86.4 807.0,93.3 807.3,94.0 807.7,97.0 808.0,101.4 808.3,99.7 808.7,109.1 809.0,103.8 809.3,99.4 809.7,102.3 810.0,99.4 810.3,103.3 810.7,101.6 811.0,95.8 811.3,93.9 811.7,88.5 812.0,83.5 812.3,80.9 812.7,78.7 813.0,78.0 813.3,73.8 813.7,74.5 814.0,71.7 814.3,66.3 814.7,67.2 815.0,65.5 815.3,67.3 815.7,66.9 816.0,65.0 816.3,65.4 816.7,70.5 817.0,72.9 817.3,74.5 817.7,80.0 818.0,82.0 818.3,88.5 818.7,86.3 819.0,88.9 819.3,91.7 819.7,89.1 820.0,99.3 820.3,101.0 820.7,94.7 821.0,99.4 821.3,95.6 821.7,98.1 822.0,98.5 822.3,105.0 822.7,101.3 823.0,101.8 823.3,100.9 823.7,101.8 824.0,106.8 824.3,104.5 824.7,103.6 825.0,99.0 825.3,98.0 825.7,99.2 826.0,93.6 826.3,95.8 826.7,84.9 827.0,93.6 827.3,83.3 827.7,79.3 828.0,81.4 828.3,72.4 828.7,72.0 829.0,71.6 829.3,72.8 829.7,70.7 830.0,70.6 830.3,66.5 830.7,63.8 831.0,71.3 831.3,74.2 831.7,74.8 832.0,76.6 832.3,77.5 832.7,78.3 833.0,85.3 833.3,86.1 833.7,88.8 834.0,89.9 834.3,90.1 834.7,90.9 835.0,95.0 835.3,96.6 835.7,99.8 836.0,104.0 836.3,100.3 836.7,101.5 837.0,105.7 837.3,100.0 837.7,97.4 838.0,95.2 838.3,92.1 838.7,89.7 839.0,87.4 839.3,83.1 839.7,81.1 840.0,80.2 840.3,74.8 840.7,73.0 841.0,71.1 841.3,67.4 841.7,71.3 842.0,72.9 842.3,73.6 842.7,71.7 843.0,65.4 843.3,72.8 843.7,69.5" fill="none" stroke="#ffff00" stroke-width="0.9"/></svg><div class="lbl" style="top:8.5px;left:3.5px">CAIS<br>HHZ</div><div class="tm" style="left:139.5px;top:171px">14:30:48.37</div><div class="tm" style="left:307.5px;top:171px">14:31:08.37</div><div class="tm" style="left:475.5px;top:171px">14:31:28.37</div><div class="tm" style="left:643.5px;top:171px">14:31:48.37</div></div>
 <div class="a" style="left:1px;top:280px;width:844px;height:2px;background:#e8e8e8"></div>
 <div class="panel" style="top:282px;height:177px"><svg class="a" style="left:0;top:0" width="844" height="177" viewBox="0 0 844 177"><path d="M23.5 177 V3 H840.5 V177" stroke="#9a9a9a" stroke-width="1" fill="none"/><polyline points="0.0,85.9 0.3,85.6 0.7,82.2 1.0,79.0 1.3,83.3 1.7,78.5 2.0,84.9 2.3,83.6 2.7,81.2 3.0,80.9 3.3,77.4 3.7,78.7 4.0,81.4 4.3,85.8 4.7,84.1 5.0,85.5 5.3,85.0 5.7,87.5 6.0,87.7 6.3,91.9 6.7,91.7 7.0,93.6 7.3,92.1 7.7,95.1 8.0,95.2 8.3,97.9 8.7,96.6 9.0,89.8 9.3,89.5 9.7,91.9 10.0,85.9 10.3,86.2 10.7,87.6 11.0,87.1 11.3,80.4 11.7,76.8 12.0,77.0 12.3,77.9 12.7,78.7 13.0,72.2 13.3,75.1 13.7,72.6 14.0,72.2 14.3,70.8 14.7,72.6 15.0,76.2 15.3,74.3 15.7,82.0 16.0,85.8 16.3,88.2 16.7,94.2 17.0,100.7 17.3,102.4 17.7,108.4 18.0,110.6 18.3,115.6 18.7,112.8 19.0,112.9 19.3,110.7 19.7,110.5 20.0,109.1 20.3,107.0 20.7,102.4 21.0,96.6 21.3,94.9 21.7,92.5 22.0,92.6 22.3,85.4 22.7,88.3 23.0,86.5 23.3,81.0 23.7,86.6 24.0,86.0 24.3,86.3 24.7,86.5 25.0,92.4 25.3,92.5 25.7,96.2 26.0,96.1 26.3,96.0 26.7,94.5 27.0,89.2 27.3,90.7 27.7,88.8 28.0,85.9 28.3,81.1 28.7,83.3 29.0,79.8 29.3,79.1 29.7,75.4 30.0,75.4 30.3,75.3 30.7,72.6 31.0,75.5 31.3,75.6 31.7,74.1 32.0,72.0 32.3,72.8 32.7,71.5 33.0,75.1 33.3,74.5 33.7,67.2 34.0,69.5 34.3,69.8 34.7,75.6 35.0,77.3 35.3,77.0 35.7,77.1 36.0,79.3 36.3,85.8 36.7,88.5 37.0,89.6 37.3,93.5 37.7,96.1 38.0,93.4 38.3,98.4 38.7,100.0 39.0,103.7 39.3,104.5 39.7,103.7 40.0,104.1 40.3,100.8 40.7,98.8 41.0,97.7 41.3,99.4 41.7,91.9 42.0,95.8 42.3,92.1 42.7,90.3 43.0,89.1 43.3,88.3 43.7,87.1 44.0,84.6 44.3,84.2 44.7,82.2 45.0,82.6 45.3,82.8 45.7,80.9 46.0,83.6 46.3,84.7 46.7,86.7 47.0,87.3 47.3,87.2 47.7,89.5 48.0,93.7 48.3,89.1 48.7,92.4 49.0,93.1 49.3,92.8 49.7,92.6 50.0,94.4 50.3,91.2 50.7,88.9 51.0,90.4 51.3,82.4 51.7,83.8 52.0,82.3 52.3,80.6 52.7,81.6 53.0,77.0 53.3,78.8 53.7,76.9 54.0,77.6 54.3,74.4 54.7,74.8 55.0,77.7 55.3,78.7 55.7,83.4 56.0,81.9 56.3,86.7 56.7,87.6 57.0,91.8 57.3,90.8 57.7,98.5 58.0,104.4 58.3,103.9 58.7,105.3 59.0,102.0 59.3,103.7 59.7,103.3 60.0,97.5 60.3,95.6 60.7,95.5 61.0,94.6 61.3,88.6 61.7,86.4 62.0,84.0 62.3,78.4 62.7,81.4 63.0,75.9 63.3,81.7 63.7,81.7 64.0,80.0 64.3,78.5 64.7,79.1 65.0,78.3 65.3,82.2 65.7,87.2 66.0,84.3 66.3,85.8 66.7,86.2 67.0,87.4 67.3,89.8 67.7,92.9 68.0,90.5 68.3,95.3 68.7,93.2 69.0,93.1 69.3,95.9 69.7,97.7 70.0,97.4 70.3,101.1 70.7,98.6 71.0,99.1 71.3,98.8 71.7,98.0 72.0,96.4 72.3,89.5 72.7,87.5 73.0,86.1 73.3,82.0 73.7,78.7 74.0,75.9 74.3,74.8 74.7,70.5 75.0,64.9 75.3,64.7 75.7,62.7 76.0,65.4 76.3,60.6 76.7,65.8 77.0,69.8 77.3,74.4 77.7,79.7 78.0,79.9 78.3,83.8 78.7,88.7 79.0,95.9 79.3,96.1 79.7,98.3 80.0,100.8 80.3,103.7 80.7,107.3 81.0,107.0 81.3,106.9 81.7,106.1 82.0,103.0 82.3,99.2 82.7,102.4 83.0,99.0 83.3,100.3 83.7,98.9 84.0,97.5 84.3,93.4 84.7,96.9 85.0,99.7 85.3,97.1 85.7,94.8 86.0,94.5 86.3,91.8 86.7,91.0 87.0,93.1 87.3,91.5 87.7,90.8 88.0,88.0 88.3,89.7 88.7,85.3 89.0,87.9 89.3,83.0 89.7,79.8 90.0,82.4 90.3,81.3 90.7,82.1 91.0,82.0 91.3,84.8 91.7,83.6 92.0,84.3 92.3,82.8 92.7,85.4 93.0,91.5 93.3,90.7 93.7,88.8 94.0,91.0 94.3,95.2 94.7,95.3 95.0,93.9 95.3,90.9 95.7,87.7 96.0,88.2 96.3,83.3 96.7,77.2 97.0,74.0 97.3,72.0 97.7,69.1 98.0,66.9 98.3,64.6 98.7,65.8 99.0,62.8 99.3,61.4 99.7,64.4 100.0,63.9 100.3,70.9 100.7,73.8 101.0,84.3 101.3,86.6 101.7,89.3 102.0,94.0 102.3,100.5 102.7,104.0 103.0,107.8 103.3,111.0 103.7,113.2 104.0,115.6 104.3,117.4 104.7,114.3 105.0,117.4 105.3,113.3 105.7,110.7 106.0,109.4 106.3,103.2 106.7,101.2 107.0,94.9 107.3,89.6 107.7,85.5 108.0,85.1 108.3,84.7 108.7,79.3 109.0,80.1 109.3,77.3 109.7,79.7 110.0,80.1 110.3,84.6 110.7,83.4 111.0,84.3 111.3,89.4 111.7,87.8 112.0,91.9 112.3,93.8 112.7,91.4 113.0,93.2 113.3,91.8 113.7,89.8 114.0,87.5 114.3,86.2 114.7,83.7 115.0,78.1 115.3,77.2 115.7,71.9 116.0,68.8 116.3,64.1 116.7,63.3 117.0,65.8 117.3,65.4 117.7,67.5 118.0,69.9 118.3,71.9 118.7,68.9 119.0,71.7 119.3,73.6 119.7,77.2 120.0,79.3 120.3,80.6 120.7,84.0 121.0,83.9 121.3,85.5 121.7,90.3 122.0,91.9 122.3,94.4 122.7,97.1 123.0,96.8 123.3,99.0 123.7,101.1 124.0,100.8 124.3,101.4 124.7,102.5 125.0,107.4 125.3,109.5 125.7,110.4 126.0,106.6 126.3,107.8 126.7,101.7 127.0,97.2 127.3,101.3 127.7,95.6 128.0,93.8 128.3,95.4 128.7,92.0 129.0,88.4 129.3,85.5 129.7,80.3 130.0,81.8 130.3,77.5 130.7,76.7 131.0,77.1 131.3,74.2 131.7,73.2 132.0,74.8 132.3,76.6 132.7,82.2 133.0,76.9 133.3,80.7 133.7,84.6 134.0,82.3 134.3,92.8 134.7,89.9 135.0,95.1 135.3,94.0 135.7,99.6 136.0,103.2 136.3,99.8 136.7,99.6 137.0,98.2 137.3,97.5 137.7,100.4 138.0,98.7 138.3,97.1 138.7,95.3 139.0,89.0 139.3,96.1 139.7,90.6 140.0,90.5 140.3,90.7 140.7,87.8 141.0,83.9 141.3,80.8 141.7,80.0 142.0,78.7 142.3,80.5 142.7,78.4 143.0,78.3 143.3,83.8 143.7,84.4 144.0,88.6 144.3,91.1 144.7,95.4 145.0,97.2 145.3,102.9 145.7,100.2 146.0,106.6 146.3,107.2 146.7,108.0 147.0,106.8 147.3,109.0 147.7,102.8 148.0,100.5 148.3,100.4 148.7,97.4 149.0,94.3 149.3,93.1 149.7,92.3 150.0,86.3 150.3,83.9 150.7,84.0 151.0,86.2 151.3,82.6 151.7,83.3 152.0,83.6 152.3,84.6 152.7,87.3 153.0,91.2 153.3,96.0 153.7,95.0 154.0,97.1 154.3,101.5 154.7,105.6 155.0,105.2 155.3,102.0 155.7,98.9 156.0,99.3 156.3,98.5 156.7,92.7 157.0,89.3 157.3,84.9 157.7,81.6 158.0,86.4 158.3,81.6 158.7,78.5 159.0,74.8 159.3,74.8 159.7,74.4 160.0,76.9 160.3,79.5 160.7,81.3 161.0,81.3 161.3,86.4 161.7,85.2 162.0,91.9 162.3,92.8 162.7,92.7 163.0,92.3 163.3,95.6 163.7,96.6 164.0,98.1 164.3,97.9 164.7,96.0 165.0,95.7 165.3,95.8 165.7,91.9 166.0,93.5 166.3,90.7 166.7,89.0 167.0,89.3 167.3,82.5 167.7,81.5 168.0,79.9 168.3,80.2 168.7,74.9 169.0,79.7 169.3,73.4 169.7,71.2 170.0,69.9 170.3,69.1 170.7,72.2 171.0,78.8 171.3,77.3 171.7,81.7 172.0,80.7 172.3,82.1 172.7,84.1 173.0,88.6 173.3,88.6 173.7,90.8 174.0,94.9 174.3,100.1 174.7,97.4 175.0,102.4 175.3,100.2 175.7,99.4 176.0,98.6 176.3,99.1 176.7,97.3 177.0,100.0 177.3,98.2 177.7,93.2 178.0,97.4 178.3,89.7 178.7,86.6 179.0,88.6 179.3,86.5 179.7,87.9 180.0,85.3 180.3,83.3 180.7,85.6 181.0,82.1 181.3,78.8 181.7,80.2 182.0,82.7 182.3,81.3 182.7,84.8 183.0,87.8 183.3,90.9 183.7,91.5 184.0,92.1 184.3,93.6 184.7,99.9 185.0,103.7 185.3,105.8 185.7,104.1 186.0,105.4 186.3,106.1 186.7,108.5 187.0,104.6 187.3,103.8 187.7,103.1 188.0,100.7 188.3,97.0 188.7,92.8 189.0,91.2 189.3,89.3 189.7,83.5 190.0,82.2 190.3,77.5 190.7,77.0 191.0,72.3 191.3,71.0 191.7,69.1 192.0,69.9 192.3,72.6 192.7,75.5 193.0,78.4 193.3,80.3 193.7,80.5 194.0,83.6 194.3,89.7 194.7,97.1 195.0,99.2 195.3,101.2 195.7,105.3 196.0,109.2 196.3,110.2 196.7,109.3 197.0,110.1 197.3,107.5 197.7,107.0 198.0,105.0 198.3,101.1 198.7,98.5 199.0,93.4 199.3,93.8 199.7,88.9 200.0,87.4 200.3,85.3 200.7,83.6 201.0,81.1 201.3,73.9 201.7,76.5 202.0,79.1 202.3,79.8 202.7,84.7 203.0,84.2 203.3,83.1 203.7,86.2 204.0,87.9 204.3,92.2 204.7,92.0 205.0,98.1 205.3,95.8 205.7,100.6 206.0,102.1 206.3,102.3 206.7,102.4 207.0,98.8 207.3,95.8 207.7,97.3 208.0,95.8 208.3,92.2 208.7,91.1 209.0,87.4 209.3,85.3 209.7,85.8 210.0,79.6 210.3,79.1 210.7,77.0 211.0,79.4 211.3,75.3 211.7,76.9 212.0,74.9 212.3,76.6 212.7,76.0 213.0,74.8 213.3,81.3 213.7,77.3 214.0,79.1 214.3,81.5 214.7,86.0 215.0,85.7 215.3,87.0 215.7,88.1 216.0,88.2 216.3,87.8 216.7,90.4 217.0,92.6 217.3,88.3 217.7,92.4 218.0,92.4 218.3,87.0 218.7,89.3 219.0,87.2 219.3,86.5 219.7,87.7 220.0,93.2 220.3,91.1 220.7,91.7 221.0,92.1 221.3,95.0 221.7,99.2 222.0,98.9 222.3,100.8 222.7,101.8 223.0,103.8 223.3,105.4 223.7,103.6 224.0,103.6 224.3,100.0 224.7,97.7 225.0,97.5 225.3,91.7 225.7,92.3 226.0,85.3 226.3,87.0 226.7,84.3 227.0,82.9 227.3,76.0 227.7,74.5 228.0,71.9 228.3,73.6 228.7,68.3 229.0,71.3 229.3,75.1 229.7,75.3 230.0,80.2 230.3,81.5 230.7,83.8 231.0,87.6 231.3,94.4 231.7,97.1 232.0,101.5 232.3,99.4 232.7,95.7 233.0,97.6 233.3,88.8 233.7,93.0 234.0,89.4 234.3,88.7 234.7,87.0 235.0,86.0 235.3,86.8 235.7,84.1 236.0,79.9 236.3,78.1 236.7,84.1 237.0,85.8 237.3,85.9 237.7,87.7 238.0,84.8 238.3,85.8 238.7,82.9 239.0,85.5 239.3,82.9 239.7,85.5 240.0,85.5 240.3,87.3 240.7,88.8 241.0,87.7 241.3,89.8 241.7,87.2 242.0,92.3 242.3,94.5 242.7,93.4 243.0,95.2 243.3,94.8 243.7,98.1 244.0,96.4 244.3,101.3 244.7,99.3 245.0,103.4 245.3,101.7 245.7,105.6 246.0,101.6 246.3,101.7 246.7,98.8 247.0,98.4 247.3,96.0 247.7,94.7 248.0,96.0 248.3,96.1 248.7,98.0 249.0,100.4 249.3,97.7 249.7,96.0 250.0,100.7 250.3,100.9 250.7,103.2 251.0,102.5 251.3,102.9 251.7,106.8 252.0,103.7 252.3,104.5 252.7,106.0 253.0,106.3 253.3,108.5 253.7,108.5 254.0,106.7 254.3,104.3 254.7,103.6 255.0,99.9 255.3,99.0 255.7,97.0 256.0,91.8 256.3,86.6 256.7,85.9 257.0,82.9 257.3,81.4 257.7,82.3 258.0,80.8 258.3,82.4 258.7,87.3 259.0,86.5 259.3,88.5 259.7,92.3 260.0,95.0 260.3,101.2 260.7,102.5 261.0,107.4 261.3,105.9 261.7,105.7 262.0,110.3 262.3,106.5 262.7,108.0 263.0,107.5 263.3,102.5 263.7,97.3 264.0,96.3 264.3,91.3 264.7,89.0 265.0,86.9 265.3,83.2 265.7,80.8 266.0,79.2 266.3,74.0 266.7,68.2 267.0,67.0 267.3,64.3 267.7,68.3 268.0,65.4 268.3,66.5 268.7,69.4 269.0,66.3 269.3,71.8 269.7,74.0 270.0,77.7 270.3,78.8 270.7,81.5 271.0,82.7 271.3,87.5 271.7,90.5 272.0,95.3 272.3,96.7 272.7,94.2 273.0,96.8 273.3,100.1 273.7,102.8 274.0,104.1 274.3,102.4 274.7,101.1 275.0,98.6 275.3,103.3 275.7,103.1 276.0,99.6 276.3,97.6 276.7,97.4 277.0,98.4 277.3,99.0 277.7,100.1 278.0,97.6 278.3,95.9 278.7,96.4 279.0,95.9 279.3,93.1 279.7,90.1 280.0,85.1 280.3,84.1 280.7,80.7 281.0,76.5 281.3,73.5 281.7,72.7 282.0,70.5 282.3,71.9 282.7,76.3 283.0,76.0 283.3,78.8 283.7,81.2 284.0,86.5 284.3,88.9 284.7,97.3 285.0,96.8 285.3,99.9 285.7,104.7 286.0,103.0 286.3,109.3 286.7,107.9 287.0,109.6 287.3,107.8 287.7,105.4 288.0,114.1 288.3,99.9 288.7,117.9 289.0,86.5 289.3,96.9 289.7,85.4 290.0,113.0 290.3,77.0 290.7,97.9 291.0,75.9 291.3,111.9 291.7,67.9 292.0,92.5 292.3,72.2 292.7,111.3 293.0,67.1 293.3,108.9 293.7,63.7 294.0,106.1 294.3,63.4 294.7,119.1 295.0,69.7 295.3,100.5 295.7,68.4 296.0,137.7 296.3,52.8 296.7,104.1 297.0,37.9 297.3,121.3 297.7,56.6 298.0,105.0 298.3,75.4 298.7,101.6 299.0,59.0 299.3,154.5 299.7,40.0 300.0,108.1 300.3,66.6 300.7,149.4 301.0,42.7 301.3,137.5 301.7,43.4 302.0,106.4 302.3,58.7 302.7,146.1 303.0,52.9 303.3,119.9 303.7,58.5 304.0,127.7 304.3,46.4 304.7,111.2 305.0,56.7 305.3,102.3 305.7,48.7 306.0,90.5 306.3,53.7 306.7,163.8 307.0,26.0 307.3,122.5 307.7,31.1 308.0,106.7 308.3,44.8 308.7,94.5 309.0,44.2 309.3,113.0 309.7,56.5 310.0,116.3 310.3,49.8 310.7,95.3 311.0,45.9 311.3,95.3 311.7,37.1 312.0,132.1 312.3,72.3 312.7,104.5 313.0,19.9 313.3,108.9 313.7,53.0 314.0,95.0 314.3,34.6 314.7,144.7 315.0,15.8 315.3,103.1 315.7,42.7 316.0,138.6 316.3,31.1 316.7,172.4 317.0,29.3 317.3,101.2 317.7,63.7 318.0,121.4 318.3,25.6 318.7,106.3 319.0,41.6 319.3,179.0 319.7,66.3 320.0,99.1 320.3,12.6 320.7,92.5 321.0,16.6 321.3,137.0 321.7,26.9 322.0,172.3 322.3,23.8 322.7,150.2 323.0,50.4 323.3,151.6 323.7,25.2 324.0,90.3 324.3,18.6 324.7,132.6 325.0,55.3 325.3,162.1 325.7,19.4 326.0,83.8 326.3,39.5 326.7,113.2 327.0,12.3 327.3,158.9 327.7,54.1 328.0,100.8 328.3,64.8 328.7,128.1 329.0,43.2 329.3,108.4 329.7,32.4 330.0,101.1 330.3,57.0 330.7,133.9 331.0,60.6 331.3,112.1 331.7,54.7 332.0,84.8 332.3,60.2 332.7,77.9 333.0,26.9 333.3,88.7 333.7,45.4 334.0,82.2 334.3,44.5 334.7,122.8 335.0,33.6 335.3,139.1 335.7,24.7 336.0,100.0 336.3,21.4 336.7,81.5 337.0,21.6 337.3,79.6 337.7,19.5 338.0,164.5 338.3,44.8 338.7,95.5 339.0,45.3 339.3,86.7 339.7,-2.0 340.0,145.2 340.3,16.6 340.7,92.9 341.0,7.9 341.3,143.7 341.7,36.8 342.0,179.0 342.3,14.1 342.7,97.5 343.0,6.8 343.3,110.7 343.7,27.8 344.0,136.9 344.3,26.3 344.7,104.4 345.0,20.8 345.3,115.5 345.7,44.1 346.0,102.1 346.3,38.1 346.7,89.3 347.0,44.6 347.3,95.5 347.7,36.9 348.0,89.4 348.3,49.8 348.7,77.7 349.0,22.9 349.3,98.5 349.7,48.5 350.0,163.8 350.3,9.5 350.7,110.9 351.0,40.2 351.3,137.1 351.7,14.7 352.0,172.8 352.3,14.9 352.7,93.9 353.0,33.5 353.3,111.3 353.7,33.5 354.0,96.7 354.3,-2.0 354.7,167.4 355.0,40.7 355.3,163.2 355.7,3.3 356.0,162.4 356.3,-2.0 356.7,161.7 357.0,-2.0 357.3,111.9 357.7,-2.0 358.0,113.9 358.3,41.7 358.7,99.3 359.0,11.3 359.3,150.2 359.7,46.0 360.0,98.4 360.3,58.6 360.7,97.4 361.0,46.4 361.3,114.7 361.7,48.3 362.0,107.9 362.3,41.0 362.7,129.3 363.0,45.3 363.3,93.9 363.7,46.2 364.0,105.0 364.3,70.1 364.7,141.2 365.0,62.5 365.3,103.3 365.7,55.7 366.0,125.8 366.3,64.7 366.7,83.8 367.0,57.2 367.3,122.0 367.7,64.0 368.0,104.3 368.3,58.5 368.7,93.1 369.0,59.5 369.3,91.3 369.7,63.7 370.0,77.0 370.3,58.3 370.7,86.2 371.0,60.2 371.3,74.0 371.7,68.6 372.0,78.6 372.3,57.1 372.7,87.7 373.0,56.9 373.3,74.6 373.7,60.3 374.0,72.7 374.3,59.4 374.7,67.8 375.0,70.0 375.3,81.5 375.7,74.9 376.0,67.4 376.3,75.6 376.7,66.1 377.0,70.6 377.3,64.4 377.7,68.2 378.0,60.4 378.3,71.6 378.7,63.5 379.0,64.7 379.3,71.7 379.7,74.9 380.0,63.0 380.3,72.5 380.7,69.3 381.0,88.5 381.3,62.9 381.7,81.7 382.0,76.1 382.3,71.0 382.7,73.7 383.0,74.2 383.3,82.4 383.7,84.4 384.0,54.2 384.3,69.7 384.7,73.1 385.0,68.3 385.3,74.5 385.7,67.0 386.0,77.8 386.3,72.1 386.7,70.0 387.0,82.1 387.3,55.9 387.7,90.4 388.0,87.0 388.3,78.3 388.7,78.0 389.0,71.5 389.3,70.5 389.7,80.9 390.0,63.5 390.3,87.3 390.7,66.4 391.0,77.1 391.3,62.6 391.7,70.6 392.0,75.1 392.3,68.4 392.7,69.7 393.0,84.2 393.3,76.6 393.7,88.9 394.0,69.3 394.3,64.6 394.7,86.2 395.0,70.5 395.3,77.7 395.7,64.7 396.0,70.9 396.3,67.0 396.7,83.2 397.0,66.3 397.3,60.4 397.7,73.1 398.0,72.1 398.3,82.9 398.7,84.2 399.0,72.8 399.3,87.6 399.7,49.9 400.0,65.9 400.3,83.6 400.7,87.2 401.0,89.0 401.3,63.1 401.7,80.7 402.0,66.1 402.3,76.7 402.7,86.7 403.0,66.9 403.3,78.5 403.7,76.9 404.0,77.6 404.3,71.0 404.7,76.4 405.0,75.3 405.3,62.5 405.7,86.7 406.0,68.5 406.3,69.9 406.7,65.5 407.0,70.4 407.3,66.3 407.7,71.6 408.0,74.2 408.3,85.3 408.7,73.8 409.0,67.8 409.3,72.1 409.7,72.1 410.0,77.0 410.3,76.9 410.7,75.7 411.0,70.1 411.3,77.4 411.7,73.0 412.0,64.8 412.3,82.5 412.7,75.9 413.0,71.0 413.3,62.7 413.7,64.3 414.0,81.6 414.3,72.9 414.7,70.4 415.0,74.0 415.3,72.4 415.7,75.9 416.0,74.2 416.3,68.8 416.7,76.1 417.0,74.3 417.3,70.4 417.7,72.2 418.0,81.6 418.3,75.0 418.7,66.1 419.0,65.6 419.3,67.4 419.7,69.2 420.0,81.0 420.3,61.8 420.7,69.3 421.0,75.3 421.3,77.5 421.7,83.3 422.0,75.8 422.3,68.7 422.7,70.5 423.0,72.0 423.3,73.1 423.7,69.1 424.0,74.4 424.3,79.7 424.7,69.7 425.0,71.6 425.3,71.5 425.7,70.4 426.0,75.9 426.3,71.6 426.7,74.5 427.0,71.8 427.3,71.5 427.7,70.1 428.0,71.5 428.3,67.0 428.7,72.9 429.0,70.6 429.3,76.1 429.7,71.5 430.0,71.5 430.3,76.1 430.7,72.8 431.0,68.3 431.3,73.8 431.7,90.1 432.0,72.0 432.3,74.2 432.7,69.9 433.0,67.9 433.3,65.4 433.7,66.8 434.0,72.1 434.3,77.5 434.7,76.6 435.0,73.8 435.3,83.2 435.7,61.7 436.0,57.8 436.3,73.0 436.7,71.0 437.0,73.6 437.3,74.9 437.7,78.0 438.0,64.6 438.3,76.7 438.7,66.6 439.0,69.8 439.3,72.8 439.7,75.6 440.0,73.6 440.3,77.5 440.7,74.7 441.0,71.4 441.3,75.7 441.7,71.6 442.0,82.8 442.3,69.9 442.7,85.4 443.0,85.7 443.3,74.1 443.7,74.1 444.0,75.7 444.3,71.6 444.7,77.1 445.0,77.3 445.3,76.2 445.7,80.7 446.0,71.8 446.3,67.6 446.7,65.1 447.0,57.5 447.3,56.8 447.7,63.3 448.0,61.6 448.3,72.9 448.7,73.0 449.0,74.1 449.3,82.0 449.7,72.7 450.0,77.7 450.3,76.9 450.7,76.1 451.0,79.4 451.3,73.6 451.7,73.5 452.0,79.4 452.3,79.9 452.7,77.5 453.0,82.7 453.3,74.2 453.7,77.8 454.0,89.2 454.3,71.8 454.7,84.0 455.0,81.6 455.3,75.6 455.7,92.4 456.0,85.4 456.3,80.8 456.7,80.2 457.0,80.7 457.3,81.0 457.7,92.1 458.0,85.9 458.3,83.3 458.7,85.1 459.0,85.1 459.3,79.9 459.7,89.1 460.0,83.6 460.3,83.8 460.7,78.6 461.0,79.1 461.3,76.3 461.7,75.5 462.0,76.2 462.3,72.2 462.7,71.8 463.0,76.4 463.3,77.6 463.7,75.4 464.0,72.8 464.3,71.5 464.7,69.2 465.0,67.0 465.3,68.6 465.7,64.2 466.0,66.0 466.3,57.2 466.7,58.6 467.0,57.5 467.3,49.9 467.7,45.6 468.0,43.1 468.3,39.5 468.7,35.6 469.0,43.4 469.3,37.2 469.7,32.1 470.0,35.2 470.3,30.1 470.7,31.9 471.0,33.9 471.3,33.8 471.7,40.6 472.0,41.7 472.3,49.5 472.7,54.6 473.0,66.5 473.3,70.2 473.7,77.6 474.0,82.3 474.3,93.4 474.7,91.8 475.0,97.1 475.3,107.3 475.7,109.9 476.0,111.4 476.3,114.7 476.7,112.5 477.0,109.4 477.3,105.7 477.7,107.5 478.0,101.8 478.3,95.4 478.7,89.8 479.0,85.5 479.3,80.6 479.7,69.6 480.0,69.6 480.3,63.1 480.7,61.5 481.0,54.5 481.3,52.5 481.7,44.5 482.0,51.1 482.3,44.6 482.7,48.9 483.0,50.5 483.3,49.1 483.7,54.5 484.0,55.9 484.3,58.6 484.7,60.2 485.0,65.3 485.3,74.3 485.7,75.8 486.0,78.9 486.3,85.5 486.7,87.2 487.0,83.7 487.3,81.3 487.7,85.2 488.0,79.7 488.3,77.5 488.7,74.5 489.0,73.3 489.3,80.4 489.7,70.4 490.0,73.8 490.3,66.2 490.7,62.8 491.0,63.8 491.3,62.7 491.7,63.8 492.0,61.1 492.3,64.1 492.7,62.5 493.0,60.4 493.3,61.0 493.7,64.6 494.0,69.2 494.3,70.7 494.7,75.4 495.0,75.5 495.3,76.6 495.7,80.1 496.0,76.4 496.3,84.5 496.7,80.4 497.0,85.5 497.3,85.0 497.7,84.7 498.0,88.6 498.3,78.9 498.7,81.6 499.0,80.0 499.3,82.3 499.7,81.3 500.0,78.0 500.3,79.6 500.7,76.6 501.0,75.0 501.3,70.3 501.7,72.2 502.0,68.4 502.3,73.0 502.7,70.5 503.0,67.6 503.3,66.9 503.7,63.1 504.0,64.1 504.3,65.5 504.7,67.9 505.0,66.5 505.3,70.3 505.7,68.9 506.0,76.1 506.3,72.9 506.7,75.3 507.0,73.0 507.3,72.6 507.7,79.5 508.0,80.1 508.3,77.6 508.7,76.0 509.0,79.0 509.3,72.1 509.7,75.1 510.0,72.3 510.3,69.9 510.7,66.1 511.0,62.9 511.3,62.1 511.7,64.6 512.0,60.9 512.3,56.4 512.7,58.8 513.0,50.4 513.3,57.7 513.7,54.6 514.0,56.9 514.3,55.5 514.7,58.4 515.0,59.4 515.3,65.8 515.7,64.5 516.0,69.2 516.3,71.1 516.7,80.4 517.0,78.5 517.3,86.7 517.7,86.7 518.0,88.3 518.3,91.4 518.7,89.3 519.0,99.2 519.3,102.6 519.7,110.0 520.0,105.0 520.3,104.4 520.7,104.4 521.0,101.1 521.3,101.0 521.7,94.2 522.0,95.8 522.3,89.1 522.7,88.2 523.0,82.2 523.3,77.8 523.7,73.6 524.0,72.2 524.3,68.7 524.7,69.3 525.0,66.1 525.3,56.3 525.7,55.2 526.0,53.3 526.3,53.3 526.7,52.9 527.0,50.9 527.3,47.3 527.7,42.9 528.0,43.0 528.3,48.8 528.7,48.5 529.0,51.2 529.3,53.1 529.7,49.0 530.0,60.1 530.3,66.5 530.7,67.2 531.0,75.1 531.3,76.9 531.7,82.5 532.0,81.7 532.3,85.6 532.7,87.0 533.0,96.6 533.3,92.0 533.7,95.8 534.0,95.8 534.3,93.6 534.7,94.5 535.0,87.8 535.3,91.7 535.7,85.9 536.0,84.7 536.3,82.7 536.7,83.2 537.0,77.0 537.3,73.7 537.7,71.4 538.0,62.7 538.3,56.2 538.7,63.2 539.0,55.9 539.3,61.5 539.7,55.4 540.0,55.5 540.3,50.0 540.7,46.3 541.0,45.2 541.3,52.9 541.7,54.8 542.0,58.2 542.3,62.4 542.7,61.5 543.0,66.8 543.3,73.9 543.7,74.9 544.0,78.4 544.3,83.9 544.7,81.2 545.0,87.2 545.3,88.5 545.7,89.1 546.0,89.6 546.3,87.3 546.7,81.1 547.0,87.5 547.3,84.1 547.7,82.0 548.0,80.5 548.3,73.9 548.7,71.8 549.0,71.3 549.3,65.4 549.7,68.1 550.0,68.5 550.3,69.1 550.7,70.4 551.0,66.6 551.3,67.7 551.7,70.8 552.0,68.5 552.3,71.8 552.7,78.4 553.0,80.9 553.3,88.0 553.7,87.6 554.0,84.3 554.3,95.7 554.7,95.1 555.0,89.2 555.3,90.8 555.7,92.5 556.0,86.6 556.3,86.7 556.7,81.0 557.0,77.1 557.3,71.5 557.7,67.7 558.0,66.1 558.3,63.0 558.7,55.5 559.0,60.6 559.3,46.2 559.7,51.5 560.0,50.2 560.3,56.3 560.7,54.9 561.0,57.7 561.3,61.8 561.7,59.7 562.0,64.8 562.3,65.8 562.7,73.7 563.0,73.0 563.3,79.4 563.7,83.2 564.0,86.1 564.3,86.6 564.7,92.6 565.0,94.4 565.3,89.7 565.7,90.1 566.0,82.7 566.3,86.9 566.7,78.8 567.0,79.4 567.3,74.7 567.7,75.1 568.0,62.5 568.3,66.6 568.7,62.2 569.0,65.7 569.3,65.9 569.7,71.0 570.0,69.1 570.3,76.0 570.7,71.6 571.0,83.2 571.3,85.2 571.7,89.0 572.0,90.3 572.3,91.9 572.7,95.1 573.0,99.2 573.3,100.2 573.7,103.8 574.0,101.8 574.3,97.1 574.7,94.3 575.0,85.0 575.3,87.4 575.7,77.9 576.0,79.4 576.3,78.7 576.7,71.6 577.0,65.9 577.3,68.2 577.7,68.0 578.0,67.4 578.3,69.0 578.7,70.6 579.0,74.2 579.3,70.3 579.7,73.0 580.0,74.7 580.3,77.2 580.7,78.0 581.0,79.4 581.3,83.8 581.7,81.6 582.0,84.0 582.3,80.5 582.7,79.2 583.0,75.8 583.3,72.4 583.7,78.5 584.0,77.9 584.3,73.5 584.7,69.7 585.0,71.2 585.3,60.1 585.7,59.7 586.0,61.4 586.3,64.1 586.7,56.6 587.0,59.8 587.3,57.0 587.7,50.3 588.0,50.0 588.3,61.0 588.7,62.3 589.0,60.8 589.3,64.9 589.7,64.8 590.0,62.1 590.3,72.1 590.7,66.6 591.0,77.4 591.3,75.0 591.7,75.0 592.0,80.4 592.3,78.5 592.7,87.9 593.0,85.9 593.3,83.7 593.7,91.8 594.0,91.7 594.3,94.4 594.7,100.3 595.0,94.0 595.3,97.0 595.7,95.3 596.0,99.5 596.3,102.2 596.7,98.8 597.0,97.7 597.3,100.7 597.7,99.1 598.0,90.9 598.3,88.0 598.7,77.4 599.0,71.4 599.3,66.7 599.7,63.5 600.0,63.0 600.3,67.2 600.7,61.6 601.0,58.3 601.3,64.0 601.7,68.8 602.0,70.5 602.3,76.7 602.7,84.2 603.0,84.2 603.3,89.8 603.7,92.1 604.0,94.9 604.3,100.3 604.7,99.6 605.0,99.8 605.3,96.4 605.7,98.1 606.0,97.7 606.3,98.6 606.7,90.9 607.0,88.2 607.3,83.2 607.7,76.6 608.0,75.6 608.3,69.5 608.7,67.8 609.0,66.6 609.3,60.1 609.7,60.7 610.0,60.4 610.3,57.3 610.7,50.1 611.0,56.2 611.3,54.3 611.7,50.1 612.0,54.3 612.3,61.8 612.7,65.0 613.0,62.9 613.3,74.9 613.7,77.8 614.0,79.1 614.3,83.8 614.7,81.5 615.0,84.6 615.3,95.5 615.7,93.5 616.0,101.0 616.3,95.3 616.7,102.7 617.0,101.9 617.3,103.1 617.7,93.5 618.0,92.6 618.3,88.8 618.7,88.9 619.0,86.7 619.3,81.2 619.7,81.0 620.0,72.4 620.3,71.2 620.7,72.6 621.0,66.5 621.3,68.7 621.7,63.9 622.0,61.7 622.3,63.8 622.7,68.0 623.0,62.4 623.3,64.0 623.7,69.9 624.0,69.9 624.3,72.7 624.7,73.4 625.0,80.8 625.3,83.7 625.7,74.7 626.0,87.3 626.3,86.3 626.7,84.7 627.0,92.8 627.3,88.5 627.7,94.3 628.0,89.2 628.3,95.0 628.7,89.9 629.0,92.4 629.3,86.1 629.7,87.4 630.0,89.7 630.3,84.1 630.7,82.1 631.0,74.7 631.3,75.4 631.7,78.4 632.0,73.3 632.3,76.1 632.7,64.5 633.0,63.8 633.3,68.2 633.7,66.1 634.0,63.8 634.3,57.6 634.7,57.0 635.0,57.6 635.3,56.2 635.7,59.7 636.0,57.8 636.3,64.8 636.7,61.4 637.0,67.2 637.3,73.8 637.7,73.6 638.0,70.9 638.3,73.4 638.7,72.5 639.0,75.2 639.3,79.4 639.7,90.3 640.0,87.0 640.3,90.9 640.7,92.3 641.0,93.8 641.3,99.9 641.7,90.7 642.0,99.2 642.3,97.1 642.7,97.9 643.0,93.8 643.3,94.8 643.7,93.7 644.0,95.7 644.3,93.0 644.7,90.6 645.0,80.3 645.3,82.2 645.7,81.1 646.0,80.3 646.3,75.4 646.7,73.2 647.0,71.8 647.3,75.6 647.7,71.9 648.0,71.2 648.3,73.2 648.7,66.5 649.0,76.6 649.3,80.6 649.7,86.9 650.0,82.5 650.3,85.6 650.7,83.8 651.0,87.3 651.3,93.4 651.7,90.8 652.0,93.9 652.3,98.1 652.7,97.6 653.0,98.0 653.3,91.3 653.7,95.6 654.0,87.5 654.3,82.9 654.7,78.8 655.0,76.9 655.3,68.6 655.7,69.2 656.0,65.3 656.3,73.0 656.7,60.7 657.0,63.2 657.3,55.6 657.7,53.5 658.0,57.1 658.3,58.6 658.7,70.4 659.0,68.4 659.3,69.5 659.7,75.4 660.0,74.5 660.3,79.7 660.7,79.2 661.0,83.1 661.3,85.4 661.7,86.6 662.0,92.6 662.3,90.2 662.7,85.7 663.0,88.2 663.3,97.8 663.7,92.1 664.0,99.7 664.3,87.2 664.7,85.6 665.0,90.0 665.3,76.7 665.7,82.9 666.0,82.1 666.3,76.2 666.7,84.6 667.0,86.2 667.3,89.2 667.7,63.0 668.0,74.7 668.3,66.7 668.7,73.3 669.0,70.8 669.3,85.4 669.7,82.4 670.0,76.6 670.3,78.1 670.7,60.1 671.0,86.7 671.3,70.6 671.7,79.9 672.0,87.7 672.3,79.5 672.7,84.7 673.0,78.9 673.3,76.2 673.7,94.3 674.0,89.1 674.3,79.7 674.7,83.8 675.0,71.8 675.3,70.6 675.7,78.2 676.0,65.6 676.3,59.7 676.7,66.4 677.0,74.3 677.3,72.3 677.7,63.3 678.0,62.3 678.3,57.9 678.7,55.7 679.0,62.5 679.3,52.0 679.7,53.8 680.0,55.2 680.3,46.4 680.7,59.5 681.0,62.2 681.3,49.8 681.7,54.0 682.0,52.8 682.3,59.9 682.7,68.4 683.0,76.4 683.3,69.8 683.7,85.4 684.0,77.7 684.3,63.2 684.7,83.9 685.0,81.1 685.3,99.6 685.7,87.5 686.0,93.2 686.3,94.9 686.7,97.1 687.0,97.4 687.3,94.3 687.7,113.4 688.0,98.0 688.3,102.4 688.7,106.5 689.0,108.9 689.3,107.6 689.7,109.7 690.0,108.6 690.3,116.8 690.7,96.8 691.0,88.9 691.3,86.2 691.7,90.7 692.0,95.6 692.3,80.7 692.7,82.5 693.0,76.1 693.3,66.1 693.7,71.8 694.0,63.3 694.3,59.4 694.7,65.0 695.0,59.7 695.3,56.9 695.7,50.3 696.0,59.9 696.3,64.6 696.7,62.2 697.0,66.3 697.3,78.6 697.7,87.3 698.0,84.6 698.3,99.5 698.7,95.7 699.0,100.6 699.3,99.4 699.7,102.7 700.0,98.1 700.3,106.8 700.7,105.5 701.0,104.7 701.3,96.8 701.7,94.6 702.0,83.7 702.3,85.5 702.7,90.5 703.0,82.4 703.3,72.5 703.7,69.0 704.0,60.9 704.3,53.1 704.7,47.5 705.0,51.0 705.3,40.3 705.7,61.7 706.0,48.4 706.3,46.0 706.7,49.7 707.0,55.4 707.3,53.3 707.7,52.5 708.0,67.0 708.3,60.7 708.7,64.6 709.0,81.4 709.3,77.0 709.7,95.5 710.0,99.3 710.3,98.7 710.7,107.1 711.0,111.5 711.3,106.3 711.7,106.9 712.0,107.9 712.3,110.2 712.7,111.9 713.0,107.2 713.3,104.8 713.7,100.2 714.0,92.5 714.3,77.3 714.7,97.5 715.0,78.8 715.3,72.9 715.7,63.8 716.0,60.2 716.3,52.7 716.7,57.0 717.0,58.0 717.3,62.0 717.7,60.1 718.0,54.8 718.3,58.2 718.7,63.9 719.0,64.6 719.3,77.6 719.7,80.9 720.0,79.9 720.3,87.4 720.7,85.6 721.0,86.1 721.3,81.8 721.7,85.2 722.0,84.4 722.3,81.3 722.7,82.9 723.0,73.1 723.3,78.3 723.7,70.4 724.0,74.9 724.3,71.7 724.7,73.5 725.0,67.3 725.3,67.4 725.7,63.4 726.0,69.0 726.3,70.9 726.7,74.3 727.0,72.2 727.3,76.6 727.7,79.1 728.0,77.9 728.3,83.5 728.7,86.6 729.0,81.9 729.3,90.4 729.7,86.2 730.0,91.8 730.3,92.7 730.7,100.1 731.0,97.7 731.3,97.5 731.7,97.2 732.0,100.9 732.3,107.0 732.7,105.6 733.0,102.7 733.3,98.8 733.7,96.0 734.0,91.9 734.3,89.4 734.7,85.8 735.0,85.8 735.3,81.6 735.7,81.2 736.0,79.4 736.3,78.8 736.7,74.6 737.0,71.0 737.3,71.3 737.7,71.7 738.0,76.7 738.3,80.4 738.7,77.9 739.0,86.9 739.3,85.6 739.7,92.8 740.0,89.9 740.3,92.5 740.7,94.9 741.0,93.5 741.3,96.8 741.7,93.4 742.0,93.0 742.3,97.8 742.7,94.0 743.0,93.5 743.3,95.1 743.7,90.8 744.0,86.9 744.3,85.6 744.7,87.4 745.0,86.7 745.3,90.9 745.7,86.2 746.0,87.6 746.3,83.7 746.7,88.6 747.0,83.1 747.3,83.6 747.7,86.2 748.0,88.5 748.3,84.0 748.7,90.4 749.0,92.5 749.3,95.1 749.7,96.0 750.0,96.2 750.3,95.3 750.7,102.1 751.0,103.2 751.3,110.2 751.7,105.5 752.0,101.9 752.3,97.4 752.7,95.1 753.0,92.1 753.3,98.4 753.7,93.8 754.0,90.8 754.3,87.5 754.7,78.3 755.0,78.7 755.3,83.8 755.7,79.9 756.0,76.4 756.3,68.7 756.7,68.6 757.0,72.2 757.3,72.8 757.7,60.7 758.0,63.0 758.3,63.5 758.7,62.6 759.0,61.3 759.3,53.7 759.7,56.9 760.0,56.9 760.3,57.0 760.7,66.3 761.0,60.6 761.3,68.2 761.7,64.8 762.0,59.8 762.3,67.2 762.7,76.9 763.0,83.9 763.3,81.7 763.7,79.5 764.0,84.6 764.3,81.4 764.7,91.4 765.0,92.4 765.3,95.5 765.7,97.4 766.0,98.8 766.3,106.2 766.7,105.1 767.0,104.3 767.3,104.9 767.7,102.5 768.0,102.0 768.3,101.3 768.7,112.0 769.0,102.7 769.3,92.5 769.7,99.3 770.0,98.4 770.3,93.3 770.7,95.0 771.0,93.0 771.3,82.7 771.7,89.2 772.0,83.3 772.3,80.8 772.7,80.9 773.0,74.3 773.3,73.3 773.7,76.9 774.0,78.9 774.3,75.5 774.7,74.4 775.0,73.3 775.3,80.9 775.7,83.1 776.0,84.8 776.3,84.4 776.7,83.7 777.0,87.8 777.3,91.9 777.7,94.5 778.0,98.4 778.3,98.8 778.7,99.4 779.0,99.6 779.3,103.3 779.7,105.7 780.0,104.4 780.3,108.6 780.7,110.5 781.0,108.8 781.3,112.3 781.7,107.5 782.0,110.5 782.3,112.7 782.7,103.3 783.0,100.5 783.3,102.1 783.7,95.7 784.0,92.9 784.3,94.3 784.7,93.4 785.0,89.0 785.3,83.8 785.7,80.3 786.0,76.6 786.3,78.1 786.7,76.7 787.0,81.4 787.3,79.3 787.7,85.7 788.0,79.2 788.3,85.4 788.7,88.0 789.0,90.2 789.3,94.2 789.7,95.3 790.0,93.9 790.3,101.2 790.7,98.3 791.0,104.0 791.3,99.1 791.7,104.8 792.0,105.4 792.3,101.1 792.7,100.1 793.0,98.6 793.3,96.1 793.7,96.0 794.0,94.5 794.3,86.4 794.7,83.2 795.0,82.9 795.3,76.4 795.7,80.4 796.0,77.2 796.3,73.9 796.7,65.7 797.0,72.3 797.3,70.9 797.7,71.6 798.0,71.4 798.3,71.0 798.7,62.1 799.0,71.8 799.3,76.1 799.7,81.2 800.0,83.1 800.3,82.5 800.7,88.6 801.0,89.4 801.3,93.9 801.7,93.0 802.0,96.6 802.3,96.3 802.7,100.6 803.0,103.1 803.3,102.1 803.7,100.6 804.0,99.6 804.3,93.8 804.7,95.4 805.0,91.6 805.3,87.3 805.7,79.8 806.0,78.3 806.3,74.6 806.7,77.0 807.0,72.1 807.3,67.0 807.7,64.0 808.0,60.3 808.3,62.6 808.7,60.9 809.0,56.5 809.3,59.5 809.7,64.0 810.0,60.5 810.3,70.8 810.7,70.1 811.0,73.5 811.3,76.0 811.7,81.3 812.0,81.2 812.3,87.6 812.7,90.3 813.0,89.4 813.3,101.7 813.7,98.3 814.0,103.8 814.3,103.5 814.7,104.8 815.0,103.8 815.3,117.7 815.7,108.9 816.0,116.1 816.3,118.4 816.7,109.0 817.0,116.9 817.3,104.2 817.7,110.6 818.0,101.4 818.3,110.3 818.7,99.1 819.0,95.7 819.3,97.6 819.7,99.0 820.0,98.5 820.3,94.4 820.7,89.5 821.0,89.4 821.3,87.8 821.7,88.3 822.0,91.3 822.3,89.2 822.7,83.4 823.0,80.5 823.3,78.3 823.7,83.3 824.0,80.1 824.3,86.9 824.7,79.1 825.0,83.0 825.3,82.3 825.7,90.5 826.0,76.6 826.3,85.2 826.7,98.1 827.0,86.2 827.3,98.9 827.7,101.7 828.0,102.0 828.3,107.9 828.7,96.3 829.0,101.2 829.3,105.2 829.7,117.0 830.0,114.6 830.3,115.2 830.7,105.6 831.0,110.1 831.3,107.9 831.7,115.0 832.0,94.5 832.3,99.0 832.7,92.6 833.0,108.9 833.3,99.1 833.7,98.2 834.0,95.9 834.3,93.1 834.7,86.0 835.0,95.4 835.3,82.1 835.7,90.1 836.0,93.0 836.3,84.1 836.7,79.9 837.0,80.8 837.3,79.6 837.7,97.9 838.0,99.0 838.3,86.9 838.7,83.2 839.0,88.4 839.3,84.6 839.7,81.5 840.0,90.1 840.3,89.5 840.7,97.4 841.0,88.5 841.3,91.8 841.7,91.7 842.0,86.2 842.3,102.6 842.7,88.8 843.0,89.8 843.3,88.1 843.7,101.9" fill="none" stroke="#00ffff" stroke-width="0.9"/></svg><div class="lbl" style="top:8.5px;left:3.5px">CAIS<br>HHN</div><div class="tm" style="left:144.5px;top:170px">14:30:48.97</div><div class="tm" style="left:312.5px;top:170px">14:31:08.97</div><div class="tm" style="left:480.5px;top:170px">14:31:28.97</div><div class="tm" style="left:648.5px;top:170px">14:31:48.97</div></div>
 <div class="a" style="left:1px;top:459px;width:844px;height:2px;background:#e8e8e8"></div>
 <div class="panel" style="top:461px;height:177px"><svg class="a" style="left:0;top:0" width="844" height="177" viewBox="0 0 844 177"><path d="M23.5 177 V3 H840.5 V177" stroke="#9a9a9a" stroke-width="1" fill="none"/><polyline points="0.0,108.4 0.3,108.9 0.7,107.3 1.0,111.2 1.3,112.1 1.7,115.0 2.0,113.4 2.3,114.2 2.7,114.0 3.0,114.3 3.3,109.0 3.7,112.3 4.0,111.7 4.3,109.6 4.7,107.6 5.0,107.0 5.3,105.4 5.7,102.7 6.0,102.0 6.3,99.6 6.7,97.7 7.0,95.0 7.3,93.3 7.7,95.0 8.0,92.3 8.3,91.4 8.7,87.7 9.0,89.7 9.3,87.5 9.7,92.8 10.0,92.3 10.3,97.4 10.7,94.5 11.0,92.8 11.3,93.9 11.7,97.0 12.0,99.7 12.3,99.7 12.7,100.2 13.0,101.6 13.3,103.2 13.7,101.5 14.0,103.3 14.3,104.5 14.7,102.1 15.0,105.1 15.3,101.1 15.7,99.1 16.0,102.3 16.3,101.1 16.7,102.4 17.0,96.9 17.3,97.7 17.7,101.4 18.0,96.4 18.3,99.6 18.7,102.7 19.0,102.6 19.3,103.7 19.7,103.6 20.0,100.7 20.3,100.3 20.7,96.5 21.0,97.0 21.3,92.6 21.7,90.4 22.0,86.7 22.3,85.4 22.7,89.4 23.0,90.0 23.3,93.6 23.7,91.0 24.0,91.1 24.3,92.6 24.7,92.6 25.0,91.9 25.3,98.5 25.7,96.8 26.0,95.8 26.3,99.3 26.7,101.7 27.0,102.2 27.3,100.4 27.7,103.5 28.0,103.4 28.3,103.9 28.7,104.4 29.0,106.4 29.3,103.6 29.7,104.9 30.0,102.6 30.3,101.1 30.7,104.8 31.0,104.2 31.3,103.5 31.7,99.1 32.0,100.6 32.3,99.8 32.7,98.7 33.0,97.3 33.3,94.8 33.7,95.3 34.0,95.1 34.3,95.5 34.7,95.0 35.0,94.9 35.3,96.4 35.7,98.2 36.0,100.6 36.3,101.2 36.7,104.7 37.0,108.5 37.3,109.1 37.7,110.8 38.0,111.0 38.3,115.2 38.7,116.9 39.0,119.3 39.3,123.5 39.7,121.9 40.0,120.7 40.3,124.6 40.7,124.8 41.0,128.2 41.3,131.2 41.7,128.3 42.0,127.8 42.3,124.6 42.7,124.8 43.0,123.2 43.3,119.8 43.7,115.6 44.0,115.5 44.3,110.0 44.7,104.0 45.0,101.9 45.3,104.8 45.7,100.4 46.0,97.5 46.3,92.6 46.7,88.9 47.0,87.4 47.3,86.8 47.7,82.8 48.0,84.1 48.3,83.3 48.7,82.8 49.0,82.4 49.3,85.9 49.7,87.3 50.0,89.1 50.3,90.1 50.7,89.4 51.0,93.7 51.3,94.5 51.7,97.9 52.0,101.3 52.3,103.2 52.7,103.9 53.0,107.2 53.3,107.2 53.7,108.9 54.0,108.3 54.3,111.3 54.7,109.2 55.0,112.4 55.3,110.0 55.7,108.6 56.0,108.4 56.3,107.3 56.7,104.0 57.0,106.0 57.3,102.9 57.7,103.3 58.0,107.7 58.3,105.6 58.7,105.7 59.0,102.3 59.3,102.9 59.7,102.1 60.0,103.3 60.3,109.2 60.7,107.8 61.0,107.3 61.3,107.6 61.7,109.6 62.0,106.2 62.3,107.0 62.7,110.7 63.0,110.6 63.3,108.7 63.7,109.6 64.0,106.5 64.3,106.5 64.7,104.6 65.0,102.8 65.3,101.0 65.7,100.6 66.0,99.1 66.3,95.1 66.7,95.2 67.0,93.6 67.3,92.0 67.7,88.2 68.0,86.8 68.3,83.3 68.7,82.3 69.0,83.1 69.3,82.0 69.7,77.4 70.0,77.5 70.3,81.0 70.7,77.8 71.0,82.5 71.3,82.1 71.7,84.3 72.0,86.4 72.3,92.2 72.7,96.7 73.0,95.5 73.3,102.8 73.7,106.2 74.0,108.6 74.3,111.6 74.7,115.8 75.0,122.8 75.3,125.0 75.7,125.0 76.0,125.3 76.3,129.8 76.7,125.5 77.0,128.3 77.3,127.9 77.7,129.2 78.0,126.5 78.3,129.2 78.7,128.6 79.0,121.6 79.3,122.3 79.7,125.0 80.0,119.2 80.3,117.1 80.7,119.2 81.0,117.5 81.3,115.5 81.7,110.7 82.0,108.3 82.3,111.8 82.7,111.2 83.0,108.1 83.3,106.0 83.7,102.9 84.0,97.2 84.3,101.8 84.7,100.5 85.0,99.6 85.3,99.4 85.7,94.9 86.0,94.1 86.3,93.3 86.7,92.2 87.0,93.0 87.3,91.8 87.7,88.7 88.0,89.7 88.3,88.2 88.7,88.0 89.0,90.6 89.3,89.6 89.7,91.2 90.0,92.5 90.3,93.1 90.7,97.0 91.0,101.2 91.3,99.9 91.7,104.1 92.0,103.4 92.3,106.5 92.7,106.7 93.0,109.4 93.3,107.8 93.7,111.2 94.0,109.3 94.3,113.1 94.7,112.4 95.0,111.7 95.3,112.1 95.7,114.9 96.0,110.6 96.3,109.9 96.7,112.9 97.0,106.0 97.3,108.8 97.7,107.0 98.0,103.4 98.3,102.5 98.7,100.6 99.0,98.0 99.3,100.3 99.7,96.9 100.0,97.7 100.3,93.7 100.7,95.0 101.0,93.4 101.3,97.5 101.7,93.3 102.0,94.7 102.3,94.9 102.7,99.2 103.0,97.9 103.3,103.6 103.7,101.6 104.0,102.9 104.3,104.9 104.7,103.2 105.0,103.5 105.3,105.4 105.7,102.5 106.0,101.0 106.3,101.4 106.7,100.0 107.0,100.6 107.3,99.4 107.7,99.0 108.0,96.8 108.3,99.4 108.7,98.3 109.0,96.6 109.3,98.7 109.7,95.5 110.0,95.5 110.3,94.6 110.7,92.3 111.0,94.1 111.3,91.8 111.7,92.3 112.0,96.6 112.3,96.1 112.7,89.5 113.0,94.7 113.3,91.5 113.7,89.8 114.0,91.6 114.3,89.8 114.7,94.0 115.0,92.3 115.3,92.6 115.7,90.3 116.0,91.4 116.3,94.5 116.7,94.6 117.0,95.1 117.3,93.4 117.7,92.8 118.0,94.1 118.3,98.0 118.7,95.6 119.0,93.8 119.3,96.1 119.7,98.4 120.0,98.3 120.3,98.3 120.7,98.7 121.0,101.1 121.3,102.0 121.7,105.1 122.0,103.5 122.3,104.2 122.7,106.9 123.0,109.0 123.3,110.0 123.7,110.8 124.0,110.1 124.3,114.7 124.7,112.9 125.0,115.2 125.3,112.3 125.7,112.6 126.0,111.3 126.3,110.3 126.7,109.6 127.0,109.5 127.3,109.7 127.7,108.5 128.0,106.5 128.3,103.5 128.7,107.5 129.0,104.0 129.3,104.6 129.7,107.8 130.0,104.5 130.3,102.6 130.7,100.6 131.0,98.4 131.3,100.5 131.7,101.4 132.0,97.8 132.3,97.9 132.7,96.6 133.0,97.6 133.3,98.0 133.7,97.2 134.0,99.1 134.3,97.8 134.7,100.4 135.0,101.4 135.3,104.1 135.7,106.7 136.0,106.2 136.3,110.3 136.7,110.4 137.0,108.3 137.3,109.3 137.7,108.5 138.0,107.2 138.3,105.2 138.7,106.1 139.0,101.6 139.3,104.0 139.7,99.7 140.0,96.0 140.3,96.2 140.7,98.7 141.0,91.5 141.3,94.8 141.7,90.6 142.0,87.2 142.3,88.1 142.7,90.5 143.0,88.2 143.3,88.5 143.7,89.6 144.0,92.8 144.3,91.7 144.7,98.5 145.0,99.4 145.3,98.0 145.7,99.1 146.0,103.4 146.3,103.9 146.7,105.4 147.0,103.9 147.3,106.8 147.7,105.8 148.0,100.3 148.3,96.3 148.7,95.0 149.0,92.3 149.3,93.4 149.7,94.1 150.0,89.6 150.3,90.8 150.7,88.0 151.0,91.8 151.3,89.1 151.7,90.4 152.0,93.0 152.3,93.9 152.7,95.8 153.0,94.8 153.3,98.1 153.7,99.3 154.0,100.8 154.3,100.0 154.7,102.6 155.0,107.5 155.3,103.9 155.7,105.7 156.0,102.6 156.3,111.3 156.7,111.5 157.0,107.8 157.3,107.2 157.7,100.0 158.0,103.8 158.3,99.7 158.7,100.2 159.0,98.1 159.3,96.4 159.7,93.8 160.0,92.4 160.3,93.1 160.7,87.7 161.0,89.1 161.3,86.6 161.7,88.1 162.0,88.1 162.3,85.3 162.7,92.5 163.0,86.8 163.3,91.5 163.7,92.4 164.0,94.8 164.3,94.4 164.7,97.1 165.0,98.5 165.3,98.9 165.7,102.1 166.0,105.0 166.3,106.2 166.7,108.1 167.0,107.6 167.3,106.5 167.7,111.6 168.0,110.4 168.3,111.1 168.7,111.9 169.0,109.9 169.3,104.8 169.7,105.0 170.0,106.1 170.3,104.8 170.7,100.3 171.0,100.8 171.3,100.8 171.7,96.2 172.0,96.8 172.3,92.7 172.7,89.1 173.0,84.0 173.3,85.6 173.7,82.9 174.0,83.5 174.3,84.2 174.7,87.0 175.0,84.9 175.3,87.7 175.7,90.3 176.0,92.1 176.3,99.8 176.7,99.6 177.0,104.0 177.3,103.8 177.7,106.5 178.0,108.3 178.3,114.1 178.7,115.9 179.0,116.1 179.3,118.6 179.7,115.1 180.0,116.6 180.3,117.3 180.7,116.7 181.0,114.2 181.3,111.9 181.7,109.9 182.0,109.3 182.3,109.0 182.7,107.3 183.0,102.9 183.3,105.4 183.7,103.5 184.0,104.3 184.3,103.9 184.7,101.6 185.0,98.9 185.3,97.3 185.7,98.6 186.0,96.0 186.3,98.6 186.7,95.4 187.0,94.9 187.3,95.6 187.7,96.4 188.0,95.1 188.3,94.0 188.7,89.4 189.0,91.7 189.3,88.6 189.7,85.5 190.0,85.7 190.3,88.2 190.7,86.5 191.0,83.0 191.3,86.6 191.7,84.9 192.0,86.8 192.3,87.9 192.7,90.0 193.0,90.4 193.3,95.5 193.7,97.5 194.0,98.1 194.3,100.0 194.7,101.1 195.0,104.5 195.3,104.6 195.7,109.0 196.0,109.4 196.3,109.1 196.7,112.4 197.0,108.6 197.3,106.2 197.7,104.8 198.0,100.3 198.3,98.3 198.7,90.9 199.0,86.4 199.3,81.5 199.7,80.6 200.0,77.8 200.3,72.7 200.7,69.4 201.0,67.2 201.3,71.8 201.7,75.1 202.0,74.7 202.3,78.4 202.7,79.2 203.0,81.4 203.3,89.5 203.7,89.4 204.0,92.4 204.3,99.1 204.7,104.7 205.0,109.1 205.3,108.3 205.7,112.3 206.0,106.5 206.3,107.4 206.7,101.3 207.0,102.6 207.3,105.0 207.7,101.5 208.0,96.0 208.3,92.4 208.7,88.3 209.0,85.8 209.3,85.7 209.7,83.4 210.0,78.9 210.3,78.6 210.7,76.5 211.0,77.4 211.3,79.8 211.7,78.7 212.0,83.0 212.3,83.2 212.7,87.2 213.0,89.8 213.3,93.1 213.7,94.8 214.0,96.0 214.3,95.6 214.7,100.7 215.0,102.9 215.3,109.7 215.7,113.1 216.0,111.1 216.3,113.2 216.7,116.7 217.0,115.0 217.3,118.4 217.7,120.6 218.0,119.7 218.3,120.1 218.7,119.3 219.0,114.9 219.3,114.4 219.7,112.5 220.0,108.1 220.3,107.2 220.7,104.6 221.0,102.3 221.3,96.7 221.7,96.6 222.0,92.3 222.3,86.7 222.7,84.4 223.0,82.7 223.3,80.8 223.7,77.4 224.0,73.7 224.3,74.4 224.7,74.4 225.0,71.8 225.3,75.8 225.7,76.7 226.0,77.0 226.3,80.6 226.7,82.5 227.0,85.7 227.3,92.9 227.7,101.0 228.0,101.5 228.3,108.2 228.7,112.3 229.0,114.0 229.3,119.3 229.7,122.4 230.0,128.5 230.3,130.2 230.7,128.9 231.0,131.3 231.3,125.4 231.7,123.3 232.0,122.2 232.3,118.4 232.7,117.9 233.0,117.0 233.3,114.5 233.7,111.7 234.0,107.0 234.3,107.5 234.7,105.2 235.0,101.4 235.3,97.5 235.7,94.5 236.0,93.2 236.3,94.7 236.7,92.4 237.0,91.5 237.3,91.1 237.7,86.6 238.0,89.9 238.3,89.5 238.7,92.9 239.0,94.5 239.3,96.8 239.7,99.9 240.0,95.7 240.3,91.2 240.7,92.1 241.0,90.9 241.3,88.0 241.7,90.5 242.0,88.2 242.3,83.4 242.7,81.7 243.0,74.2 243.3,71.2 243.7,73.2 244.0,73.1 244.3,71.5 244.7,72.7 245.0,68.9 245.3,71.0 245.7,71.4 246.0,75.5 246.3,77.8 246.7,76.8 247.0,77.6 247.3,86.0 247.7,90.0 248.0,92.6 248.3,99.8 248.7,99.9 249.0,105.6 249.3,108.1 249.7,109.2 250.0,118.4 250.3,115.4 250.7,120.0 251.0,121.1 251.3,118.2 251.7,118.3 252.0,113.6 252.3,113.7 252.7,105.8 253.0,109.9 253.3,106.1 253.7,101.4 254.0,95.0 254.3,88.9 254.7,83.0 255.0,81.6 255.3,80.1 255.7,76.7 256.0,73.4 256.3,71.7 256.7,70.8 257.0,73.8 257.3,71.2 257.7,73.8 258.0,74.1 258.3,73.0 258.7,81.3 259.0,77.8 259.3,84.8 259.7,86.3 260.0,86.1 260.3,90.1 260.7,90.7 261.0,90.3 261.3,93.7 261.7,90.3 262.0,95.8 262.3,96.4 262.7,107.1 263.0,101.6 263.3,93.0 263.7,103.5 264.0,102.6 264.3,100.3 264.7,105.9 265.0,98.3 265.3,95.2 265.7,97.8 266.0,89.4 266.3,98.5 266.7,119.0 267.0,114.2 267.3,101.2 267.7,87.5 268.0,91.1 268.3,84.3 268.7,94.1 269.0,100.7 269.3,84.0 269.7,96.5 270.0,84.9 270.3,91.8 270.7,96.5 271.0,95.4 271.3,98.9 271.7,100.6 272.0,84.7 272.3,88.8 272.7,96.2 273.0,96.4 273.3,82.6 273.7,98.1 274.0,92.1 274.3,108.2 274.7,83.4 275.0,86.2 275.3,88.4 275.7,100.0 276.0,74.3 276.3,81.6 276.7,80.0 277.0,76.0 277.3,94.0 277.7,107.6 278.0,85.2 278.3,86.0 278.7,74.4 279.0,91.8 279.3,90.2 279.7,91.9 280.0,85.1 280.3,84.1 280.7,89.2 281.0,97.2 281.3,87.5 281.7,83.6 282.0,89.3 282.3,95.3 282.7,79.2 283.0,99.5 283.3,97.4 283.7,84.2 284.0,97.0 284.3,84.5 284.7,81.9 285.0,92.2 285.3,78.9 285.7,97.4 286.0,98.1 286.3,105.8 286.7,94.8 287.0,94.8 287.3,92.5 287.7,100.0 288.0,89.7 288.3,98.9 288.7,78.7 289.0,80.8 289.3,98.9 289.7,105.6 290.0,95.0 290.3,78.5 290.7,90.9 291.0,97.4 291.3,98.9 291.7,92.2 292.0,90.1 292.3,90.6 292.7,99.4 293.0,94.0 293.3,96.4 293.7,89.5 294.0,101.6 294.3,84.6 294.7,95.9 295.0,75.3 295.3,101.5 295.7,78.9 296.0,94.8 296.3,79.2 296.7,112.0 297.0,83.3 297.3,105.4 297.7,69.8 298.0,111.6 298.3,79.9 298.7,122.2 299.0,74.3 299.3,99.6 299.7,77.0 300.0,103.2 300.3,88.2 300.7,99.5 301.0,57.7 301.3,127.0 301.7,75.3 302.0,92.3 302.3,67.0 302.7,108.1 303.0,65.4 303.3,111.0 303.7,79.3 304.0,107.8 304.3,89.0 304.7,119.4 305.0,68.8 305.3,104.4 305.7,54.2 306.0,107.8 306.3,67.9 306.7,107.7 307.0,67.3 307.3,131.7 307.7,57.6 308.0,137.7 308.3,66.9 308.7,130.6 309.0,54.5 309.3,132.0 309.7,48.0 310.0,119.7 310.3,46.5 310.7,111.2 311.0,49.1 311.3,136.4 311.7,47.5 312.0,149.1 312.3,64.2 312.7,134.9 313.0,77.5 313.3,128.1 313.7,65.3 314.0,134.5 314.3,48.7 314.7,111.4 315.0,69.6 315.3,118.5 315.7,68.8 316.0,108.0 316.3,60.4 316.7,102.3 317.0,64.9 317.3,153.0 317.7,40.7 318.0,175.5 318.3,57.6 318.7,111.8 319.0,73.5 319.3,160.7 319.7,53.0 320.0,122.7 320.3,57.3 320.7,125.4 321.0,41.9 321.3,128.0 321.7,75.0 322.0,149.9 322.3,43.8 322.7,142.2 323.0,56.6 323.3,103.0 323.7,66.8 324.0,112.5 324.3,38.3 324.7,118.8 325.0,68.3 325.3,145.4 325.7,40.0 326.0,155.9 326.3,4.6 326.7,179.0 327.0,55.3 327.3,139.8 327.7,16.0 328.0,179.0 328.3,64.3 328.7,152.0 329.0,2.5 329.3,122.0 329.7,21.3 330.0,155.9 330.3,44.3 330.7,143.8 331.0,18.8 331.3,148.7 331.7,71.5 332.0,111.3 332.3,55.7 332.7,100.7 333.0,73.7 333.3,135.6 333.7,59.0 334.0,106.7 334.3,60.4 334.7,119.8 335.0,53.4 335.3,103.2 335.7,31.6 336.0,101.3 336.3,2.2 336.7,119.2 337.0,58.1 337.3,119.8 337.7,37.5 338.0,159.9 338.3,42.4 338.7,138.2 339.0,17.2 339.3,164.4 339.7,48.8 340.0,138.4 340.3,17.8 340.7,132.6 341.0,12.9 341.3,127.3 341.7,54.4 342.0,134.1 342.3,19.9 342.7,138.4 343.0,72.6 343.3,110.4 343.7,43.5 344.0,133.8 344.3,69.5 344.7,141.1 345.0,35.6 345.3,148.1 345.7,72.3 346.0,137.9 346.3,27.8 346.7,165.2 347.0,55.6 347.3,140.7 347.7,50.6 348.0,138.7 348.3,28.7 348.7,136.0 349.0,29.3 349.3,117.8 349.7,48.4 350.0,153.2 350.3,27.6 350.7,162.6 351.0,70.0 351.3,164.7 351.7,52.2 352.0,136.4 352.3,42.0 352.7,124.1 353.0,59.4 353.3,128.7 353.7,61.3 354.0,126.9 354.3,65.8 354.7,97.0 355.0,72.4 355.3,125.2 355.7,66.7 356.0,106.5 356.3,71.2 356.7,101.2 357.0,74.5 357.3,117.8 357.7,68.5 358.0,115.2 358.3,60.3 358.7,133.7 359.0,72.0 359.3,135.6 359.7,48.5 360.0,123.0 360.3,58.9 360.7,137.8 361.0,41.3 361.3,124.1 361.7,78.8 362.0,122.7 362.3,49.6 362.7,111.1 363.0,78.6 363.3,129.8 363.7,64.4 364.0,124.0 364.3,60.6 364.7,130.2 365.0,54.9 365.3,123.5 365.7,47.2 366.0,143.3 366.3,61.1 366.7,137.8 367.0,60.7 367.3,104.2 367.7,56.7 368.0,136.6 368.3,61.2 368.7,102.0 369.0,62.8 369.3,103.4 369.7,69.8 370.0,116.6 370.3,58.6 370.7,101.3 371.0,68.3 371.3,106.5 371.7,77.1 372.0,96.6 372.3,66.9 372.7,88.1 373.0,68.1 373.3,88.6 373.7,67.1 374.0,87.8 374.3,69.9 374.7,78.4 375.0,53.0 375.3,71.6 375.7,65.8 376.0,84.6 376.3,78.8 376.7,78.0 377.0,80.5 377.3,80.0 377.7,94.4 378.0,92.0 378.3,85.1 378.7,100.0 379.0,86.9 379.3,87.6 379.7,99.1 380.0,100.1 380.3,106.1 380.7,100.5 381.0,94.6 381.3,93.0 381.7,95.7 382.0,108.6 382.3,110.8 382.7,100.5 383.0,90.4 383.3,82.7 383.7,86.8 384.0,89.5 384.3,85.1 384.7,81.1 385.0,78.8 385.3,75.1 385.7,79.2 386.0,80.5 386.3,73.6 386.7,81.2 387.0,54.8 387.3,57.9 387.7,66.1 388.0,86.3 388.3,94.0 388.7,90.6 389.0,74.9 389.3,82.8 389.7,86.9 390.0,82.8 390.3,94.1 390.7,97.5 391.0,103.2 391.3,99.2 391.7,110.0 392.0,100.3 392.3,107.9 392.7,102.3 393.0,105.0 393.3,110.1 393.7,120.2 394.0,123.7 394.3,97.8 394.7,99.8 395.0,95.2 395.3,97.0 395.7,101.9 396.0,106.4 396.3,101.4 396.7,86.6 397.0,78.9 397.3,83.6 397.7,72.5 398.0,68.9 398.3,64.9 398.7,63.1 399.0,68.1 399.3,62.6 399.7,64.6 400.0,63.1 400.3,64.5 400.7,66.0 401.0,75.2 401.3,83.8 401.7,83.7 402.0,83.0 402.3,88.4 402.7,87.0 403.0,101.2 403.3,91.0 403.7,115.2 404.0,121.7 404.3,117.4 404.7,109.5 405.0,92.7 405.3,123.9 405.7,126.0 406.0,125.5 406.3,118.6 406.7,121.9 407.0,127.0 407.3,103.7 407.7,91.6 408.0,103.3 408.3,109.7 408.7,108.5 409.0,101.8 409.3,104.1 409.7,90.2 410.0,94.0 410.3,97.6 410.7,84.9 411.0,93.9 411.3,91.7 411.7,88.3 412.0,84.4 412.3,94.3 412.7,86.0 413.0,93.9 413.3,97.3 413.7,91.9 414.0,96.3 414.3,90.9 414.7,94.1 415.0,86.0 415.3,82.8 415.7,85.1 416.0,73.7 416.3,80.3 416.7,69.8 417.0,63.9 417.3,64.4 417.7,74.0 418.0,72.2 418.3,69.5 418.7,73.9 419.0,73.5 419.3,71.8 419.7,77.9 420.0,71.9 420.3,80.0 420.7,89.1 421.0,89.9 421.3,87.0 421.7,84.4 422.0,90.5 422.3,77.1 422.7,91.5 423.0,80.0 423.3,84.8 423.7,81.4 424.0,80.6 424.3,79.3 424.7,82.5 425.0,77.1 425.3,84.5 425.7,83.7 426.0,88.5 426.3,90.4 426.7,97.2 427.0,97.7 427.3,99.5 427.7,103.8 428.0,103.4 428.3,108.7 428.7,114.8 429.0,112.9 429.3,114.5 429.7,120.9 430.0,117.4 430.3,119.7 430.7,118.2 431.0,110.5 431.3,104.4 431.7,110.7 432.0,103.6 432.3,107.4 432.7,102.6 433.0,96.6 433.3,94.6 433.7,88.4 434.0,83.5 434.3,81.9 434.7,83.3 435.0,83.6 435.3,78.7 435.7,75.7 436.0,70.9 436.3,73.2 436.7,72.7 437.0,72.8 437.3,73.4 437.7,74.6 438.0,74.7 438.3,74.6 438.7,76.7 439.0,80.3 439.3,83.0 439.7,89.6 440.0,89.5 440.3,94.6 440.7,92.7 441.0,97.7 441.3,99.3 441.7,96.7 442.0,107.8 442.3,106.9 442.7,112.7 443.0,108.7 443.3,107.9 443.7,104.7 444.0,112.2 444.3,103.5 444.7,101.0 445.0,99.5 445.3,98.9 445.7,101.6 446.0,93.2 446.3,88.4 446.7,82.6 447.0,77.6 447.3,80.8 447.7,77.3 448.0,78.0 448.3,78.7 448.7,73.2 449.0,78.4 449.3,74.8 449.7,82.5 450.0,80.4 450.3,83.8 450.7,90.0 451.0,87.0 451.3,90.0 451.7,99.3 452.0,98.6 452.3,102.6 452.7,105.0 453.0,102.2 453.3,111.3 453.7,105.8 454.0,106.0 454.3,106.9 454.7,103.5 455.0,105.7 455.3,103.1 455.7,100.8 456.0,95.9 456.3,93.3 456.7,86.4 457.0,85.3 457.3,83.9 457.7,73.5 458.0,75.1 458.3,74.4 458.7,67.8 459.0,74.2 459.3,68.0 459.7,64.1 460.0,59.6 460.3,64.4 460.7,69.8 461.0,69.0 461.3,78.4 461.7,76.1 462.0,75.0 462.3,77.6 462.7,80.5 463.0,84.8 463.3,92.3 463.7,88.4 464.0,88.3 464.3,89.7 464.7,95.2 465.0,95.2 465.3,98.6 465.7,102.3 466.0,95.5 466.3,93.4 466.7,87.5 467.0,93.7 467.3,91.5 467.7,93.1 468.0,92.4 468.3,91.1 468.7,81.3 469.0,82.7 469.3,83.3 469.7,83.4 470.0,78.9 470.3,84.8 470.7,78.7 471.0,77.9 471.3,73.8 471.7,76.1 472.0,73.3 472.3,76.4 472.7,72.8 473.0,72.8 473.3,78.4 473.7,79.4 474.0,77.4 474.3,81.0 474.7,82.3 475.0,84.5 475.3,87.2 475.7,90.8 476.0,88.2 476.3,94.9 476.7,90.2 477.0,97.7 477.3,96.4 477.7,101.8 478.0,102.3 478.3,110.2 478.7,104.4 479.0,107.5 479.3,110.2 479.7,102.6 480.0,111.0 480.3,110.5 480.7,105.1 481.0,102.7 481.3,100.5 481.7,97.6 482.0,97.3 482.3,93.0 482.7,87.7 483.0,84.3 483.3,80.6 483.7,82.8 484.0,73.7 484.3,74.7 484.7,71.9 485.0,65.1 485.3,68.1 485.7,73.6 486.0,76.8 486.3,79.0 486.7,81.1 487.0,77.0 487.3,83.7 487.7,89.9 488.0,83.8 488.3,89.7 488.7,93.6 489.0,93.0 489.3,97.3 489.7,106.1 490.0,98.5 490.3,102.4 490.7,106.5 491.0,108.4 491.3,110.1 491.7,103.7 492.0,100.1 492.3,95.5 492.7,98.9 493.0,91.9 493.3,85.3 493.7,84.0 494.0,81.7 494.3,77.9 494.7,81.3 495.0,74.8 495.3,72.2 495.7,68.5 496.0,78.2 496.3,77.7 496.7,74.8 497.0,76.6 497.3,72.6 497.7,76.7 498.0,75.1 498.3,79.5 498.7,83.5 499.0,80.3 499.3,82.3 499.7,83.4 500.0,80.4 500.3,84.5 500.7,82.9 501.0,84.1 501.3,86.0 501.7,83.6 502.0,86.1 502.3,85.3 502.7,88.2 503.0,84.8 503.3,87.6 503.7,88.2 504.0,90.2 504.3,84.0 504.7,87.3 505.0,86.8 505.3,86.0 505.7,88.4 506.0,83.0 506.3,86.3 506.7,90.4 507.0,80.5 507.3,82.5 507.7,81.2 508.0,78.9 508.3,79.3 508.7,79.2 509.0,74.9 509.3,75.9 509.7,75.1 510.0,76.8 510.3,76.1 510.7,80.4 511.0,81.7 511.3,78.9 511.7,71.3 512.0,71.5 512.3,72.4 512.7,80.8 513.0,77.9 513.3,81.6 513.7,77.0 514.0,84.2 514.3,83.3 514.7,84.5 515.0,86.4 515.3,80.2 515.7,84.6 516.0,84.1 516.3,92.6 516.7,90.7 517.0,91.3 517.3,85.3 517.7,86.2 518.0,92.3 518.3,91.2 518.7,85.2 519.0,97.5 519.3,100.6 519.7,97.1 520.0,99.4 520.3,96.7 520.7,101.6 521.0,102.6 521.3,107.1 521.7,114.5 522.0,103.8 522.3,109.7 522.7,114.7 523.0,110.6 523.3,114.5 523.7,123.2 524.0,118.0 524.3,115.9 524.7,116.1 525.0,113.0 525.3,115.6 525.7,108.0 526.0,115.0 526.3,109.0 526.7,102.1 527.0,100.3 527.3,90.1 527.7,93.7 528.0,94.6 528.3,82.0 528.7,83.3 529.0,76.2 529.3,71.4 529.7,73.5 530.0,68.9 530.3,71.9 530.7,62.6 531.0,65.8 531.3,68.0 531.7,72.3 532.0,80.1 532.3,80.3 532.7,85.2 533.0,88.8 533.3,86.4 533.7,94.5 534.0,94.6 534.3,96.0 534.7,102.4 535.0,100.0 535.3,103.9 535.7,97.3 536.0,100.4 536.3,92.0 536.7,96.4 537.0,97.7 537.3,87.2 537.7,82.3 538.0,80.6 538.3,82.1 538.7,71.6 539.0,74.5 539.3,74.5 539.7,70.3 540.0,72.7 540.3,63.7 540.7,63.9 541.0,66.8 541.3,68.4 541.7,71.3 542.0,73.1 542.3,69.4 542.7,76.9 543.0,79.3 543.3,80.1 543.7,87.6 544.0,86.7 544.3,88.4 544.7,87.2 545.0,96.7 545.3,98.2 545.7,102.5 546.0,105.7 546.3,104.5 546.7,100.0 547.0,104.0 547.3,101.6 547.7,98.0 548.0,94.3 548.3,95.9 548.7,97.4 549.0,92.3 549.3,98.5 549.7,87.9 550.0,87.2 550.3,87.2 550.7,82.9 551.0,78.7 551.3,78.1 551.7,71.1 552.0,74.4 552.3,65.9 552.7,70.2 553.0,69.2 553.3,68.4 553.7,66.3 554.0,68.5 554.3,69.5 554.7,75.2 555.0,79.0 555.3,74.0 555.7,83.5 556.0,84.5 556.3,84.3 556.7,92.4 557.0,99.7 557.3,106.1 557.7,106.5 558.0,103.4 558.3,107.2 558.7,104.3 559.0,105.2 559.3,101.5 559.7,104.5 560.0,101.4 560.3,101.3 560.7,97.0 561.0,93.4 561.3,91.4 561.7,84.4 562.0,89.8 562.3,80.5 562.7,78.7 563.0,77.1 563.3,78.2 563.7,77.7 564.0,74.0 564.3,73.8 564.7,73.4 565.0,73.9 565.3,77.8 565.7,75.2 566.0,79.1 566.3,79.9 566.7,80.9 567.0,78.6 567.3,82.9 567.7,82.0 568.0,83.7 568.3,85.2 568.7,83.5 569.0,88.8 569.3,81.8 569.7,92.1 570.0,92.4 570.3,86.9 570.7,85.0 571.0,84.1 571.3,84.7 571.7,85.9 572.0,84.7 572.3,82.2 572.7,82.0 573.0,82.2 573.3,82.7 573.7,78.8 574.0,82.1 574.3,81.3 574.7,81.9 575.0,79.6 575.3,83.4 575.7,82.0 576.0,82.2 576.3,88.1 576.7,88.8 577.0,91.2 577.3,96.6 577.7,92.1 578.0,96.4 578.3,101.0 578.7,103.9 579.0,104.2 579.3,102.9 579.7,101.6 580.0,106.7 580.3,102.4 580.7,100.9 581.0,100.1 581.3,99.1 581.7,92.8 582.0,93.3 582.3,91.5 582.7,89.5 583.0,86.2 583.3,84.9 583.7,85.2 584.0,79.9 584.3,75.8 584.7,66.5 585.0,70.2 585.3,68.7 585.7,71.0 586.0,63.2 586.3,65.6 586.7,54.3 587.0,57.2 587.3,59.3 587.7,59.6 588.0,60.3 588.3,68.3 588.7,66.3 589.0,74.2 589.3,70.6 589.7,75.5 590.0,90.0 590.3,87.9 590.7,93.2 591.0,89.1 591.3,95.1 591.7,96.4 592.0,101.6 592.3,102.7 592.7,102.5 593.0,95.5 593.3,94.8 593.7,99.7 594.0,91.6 594.3,92.2 594.7,88.9 595.0,86.5 595.3,83.1 595.7,79.4 596.0,79.7 596.3,75.9 596.7,70.3 597.0,69.8 597.3,74.2 597.7,68.0 598.0,73.4 598.3,70.7 598.7,74.6 599.0,74.4 599.3,80.7 599.7,84.2 600.0,85.3 600.3,87.0 600.7,91.1 601.0,92.3 601.3,96.3 601.7,98.6 602.0,99.7 602.3,107.0 602.7,103.7 603.0,107.2 603.3,116.5 603.7,116.0 604.0,109.9 604.3,113.3 604.7,107.6 605.0,106.0 605.3,109.9 605.7,103.3 606.0,102.6 606.3,102.8 606.7,98.7 607.0,96.6 607.3,95.4 607.7,86.1 608.0,90.0 608.3,91.4 608.7,86.9 609.0,82.8 609.3,80.5 609.7,74.8 610.0,78.2 610.3,74.5 610.7,74.3 611.0,66.4 611.3,66.2 611.7,62.2 612.0,66.1 612.3,69.5 612.7,71.3 613.0,74.2 613.3,69.0 613.7,76.5 614.0,76.6 614.3,80.0 614.7,82.1 615.0,82.9 615.3,88.1 615.7,91.1 616.0,90.6 616.3,95.2 616.7,98.3 617.0,88.1 617.3,87.7 617.7,90.9 618.0,87.6 618.3,86.9 618.7,93.1 619.0,86.1 619.3,86.4 619.7,93.2 620.0,81.0 620.3,78.6 620.7,80.8 621.0,84.3 621.3,79.8 621.7,71.4 622.0,88.0 622.3,79.9 622.7,82.1 623.0,84.5 623.3,98.6 623.7,74.2 624.0,86.9 624.3,84.0 624.7,87.0 625.0,77.1 625.3,78.9 625.7,82.4 626.0,104.3 626.3,97.5 626.7,103.4 627.0,89.6 627.3,95.7 627.7,84.6 628.0,95.9 628.3,99.3 628.7,99.0 629.0,97.5 629.3,93.0 629.7,85.1 630.0,74.9 630.3,83.7 630.7,100.8 631.0,75.1 631.3,96.4 631.7,78.4 632.0,72.9 632.3,80.0 632.7,77.4 633.0,80.2 633.3,74.7 633.7,78.3 634.0,72.0 634.3,63.9 634.7,74.9 635.0,68.7 635.3,62.9 635.7,84.9 636.0,76.7 636.3,81.4 636.7,77.1 637.0,71.5 637.3,83.3 637.7,68.3 638.0,81.9 638.3,78.9 638.7,85.6 639.0,79.7 639.3,91.8 639.7,79.4 640.0,83.0 640.3,80.7 640.7,64.6 641.0,77.6 641.3,80.9 641.7,87.7 642.0,82.8 642.3,84.2 642.7,98.8 643.0,100.4 643.3,97.6 643.7,109.7 644.0,97.9 644.3,108.9 644.7,90.5 645.0,95.3 645.3,97.3 645.7,111.3 646.0,102.9 646.3,100.2 646.7,107.2 647.0,84.5 647.3,102.8 647.7,89.6 648.0,94.2 648.3,93.1 648.7,84.7 649.0,86.9 649.3,86.2 649.7,97.1 650.0,91.8 650.3,84.5 650.7,76.6 651.0,78.8 651.3,76.7 651.7,83.6 652.0,80.6 652.3,79.6 652.7,64.8 653.0,77.2 653.3,74.2 653.7,67.4 654.0,72.9 654.3,72.5 654.7,65.2 655.0,73.6 655.3,81.6 655.7,70.1 656.0,79.5 656.3,81.1 656.7,82.4 657.0,92.7 657.3,94.4 657.7,77.8 658.0,88.2 658.3,84.1 658.7,100.6 659.0,95.0 659.3,101.6 659.7,92.4 660.0,104.8 660.3,104.5 660.7,101.0 661.0,113.2 661.3,103.4 661.7,100.4 662.0,106.1 662.3,98.9 662.7,90.2 663.0,103.7 663.3,92.4 663.7,85.0 664.0,82.9 664.3,88.0 664.7,85.9 665.0,63.8 665.3,66.4 665.7,75.2 666.0,61.3 666.3,58.6 666.7,64.2 667.0,66.2 667.3,72.3 667.7,58.7 668.0,69.9 668.3,56.6 668.7,75.2 669.0,78.2 669.3,78.5 669.7,80.9 670.0,90.4 670.3,82.7 670.7,80.8 671.0,95.2 671.3,89.0 671.7,79.2 672.0,86.7 672.3,87.1 672.7,83.0 673.0,92.5 673.3,96.3 673.7,80.3 674.0,83.7 674.3,81.7 674.7,73.4 675.0,77.5 675.3,62.8 675.7,81.5 676.0,71.2 676.3,73.8 676.7,68.5 677.0,72.3 677.3,69.0 677.7,63.3 678.0,63.5 678.3,68.5 678.7,89.6 679.0,67.0 679.3,69.6 679.7,77.8 680.0,74.3 680.3,87.0 680.7,74.9 681.0,79.8 681.3,78.3 681.7,101.5 682.0,108.3 682.3,87.9 682.7,92.9 683.0,96.6 683.3,91.9 683.7,107.2 684.0,103.5 684.3,93.4 684.7,99.6 685.0,95.2 685.3,90.1 685.7,99.2 686.0,88.3 686.3,88.3 686.7,78.6 687.0,78.2 687.3,61.3 687.7,73.1 688.0,68.0 688.3,49.1 688.7,60.8 689.0,60.2 689.3,67.6 689.7,61.2 690.0,66.6 690.3,66.7 690.7,66.7 691.0,84.1 691.3,73.3 691.7,77.2 692.0,93.1 692.3,84.2 692.7,91.7 693.0,99.3 693.3,89.7 693.7,87.6 694.0,94.0 694.3,92.3 694.7,94.1 695.0,84.7 695.3,81.5 695.7,68.6 696.0,71.5 696.3,62.5 696.7,65.2 697.0,56.7 697.3,61.1 697.7,57.1 698.0,69.2 698.3,79.1 698.7,78.9 699.0,76.9 699.3,72.5 699.7,84.7 700.0,104.6 700.3,96.7 700.7,101.5 701.0,97.8 701.3,106.5 701.7,111.2 702.0,116.9 702.3,111.4 702.7,97.3 703.0,89.0 703.3,85.6 703.7,91.3 704.0,95.8 704.3,85.8 704.7,69.1 705.0,55.6 705.3,52.4 705.7,56.8 706.0,51.5 706.3,45.9 706.7,49.0 707.0,51.6 707.3,50.5 707.7,67.6 708.0,79.5 708.3,85.7 708.7,78.1 709.0,85.3 709.3,80.2 709.7,90.8 710.0,104.5 710.3,107.0 710.7,96.4 711.0,119.7 711.3,109.1 711.7,111.6 712.0,121.4 712.3,105.0 712.7,110.2 713.0,103.3 713.3,95.9 713.7,97.5 714.0,97.6 714.3,101.8 714.7,98.5 715.0,88.0 715.3,69.8 715.7,76.2 716.0,67.9 716.3,67.1 716.7,54.3 717.0,58.7 717.3,51.1 717.7,51.0 718.0,53.4 718.3,52.9 718.7,54.4 719.0,50.6 719.3,54.7 719.7,65.0 720.0,68.6 720.3,72.3 720.7,77.1 721.0,75.9 721.3,81.5 721.7,84.8 722.0,93.8 722.3,93.1 722.7,95.2 723.0,100.3 723.3,98.5 723.7,95.3 724.0,91.7 724.3,91.7 724.7,85.1 725.0,83.2 725.3,84.4 725.7,77.5 726.0,79.9 726.3,72.8 726.7,70.1 727.0,65.6 727.3,62.2 727.7,61.3 728.0,59.1 728.3,65.1 728.7,58.2 729.0,72.6 729.3,67.0 729.7,65.7 730.0,74.3 730.3,72.1 730.7,81.7 731.0,91.3 731.3,87.2 731.7,90.9 732.0,95.0 732.3,98.8 732.7,108.3 733.0,104.2 733.3,107.8 733.7,108.9 734.0,113.9 734.3,104.7 734.7,106.3 735.0,104.0 735.3,96.6 735.7,104.7 736.0,95.8 736.3,93.8 736.7,85.0 737.0,86.0 737.3,75.2 737.7,70.5 738.0,74.6 738.3,72.1 738.7,73.2 739.0,66.0 739.3,62.6 739.7,57.5 740.0,57.5 740.3,52.3 740.7,50.4 741.0,50.5 741.3,63.5 741.7,67.0 742.0,64.4 742.3,73.8 742.7,69.3 743.0,77.6 743.3,80.6 743.7,87.5 744.0,92.0 744.3,97.7 744.7,102.1 745.0,99.3 745.3,104.9 745.7,106.2 746.0,101.2 746.3,100.8 746.7,97.7 747.0,102.0 747.3,98.4 747.7,97.4 748.0,87.7 748.3,87.3 748.7,88.9 749.0,80.4 749.3,80.9 749.7,76.9 750.0,69.7 750.3,67.1 750.7,67.3 751.0,67.0 751.3,64.7 751.7,58.0 752.0,62.3 752.3,53.3 752.7,61.0 753.0,68.6 753.3,62.3 753.7,66.0 754.0,68.2 754.3,71.6 754.7,81.1 755.0,79.3 755.3,83.2 755.7,76.0 756.0,86.4 756.3,85.4 756.7,86.4 757.0,93.4 757.3,97.2 757.7,100.4 758.0,100.6 758.3,96.5 758.7,101.8 759.0,102.9 759.3,98.6 759.7,97.7 760.0,99.3 760.3,99.5 760.7,92.3 761.0,91.3 761.3,92.0 761.7,88.0 762.0,84.9 762.3,80.1 762.7,76.2 763.0,77.5 763.3,74.8 763.7,76.3 764.0,73.4 764.3,72.7 764.7,71.8 765.0,73.8 765.3,66.5 765.7,76.2 766.0,72.5 766.3,79.3 766.7,87.3 767.0,86.8 767.3,91.5 767.7,88.0 768.0,92.6 768.3,93.9 768.7,93.3 769.0,94.1 769.3,94.2 769.7,97.1 770.0,93.0 770.3,91.8 770.7,83.0 771.0,81.9 771.3,79.9 771.7,80.9 772.0,80.6 772.3,72.4 772.7,73.1 773.0,77.0 773.3,71.6 773.7,67.7 774.0,67.4 774.3,65.0 774.7,64.8 775.0,59.5 775.3,63.9 775.7,67.0 776.0,64.0 776.3,65.9 776.7,64.7 777.0,73.0 777.3,68.5 777.7,79.8 778.0,79.9 778.3,76.6 778.7,77.3 779.0,81.1 779.3,83.5 779.7,84.8 780.0,82.8 780.3,84.3 780.7,88.1 781.0,82.3 781.3,86.6 781.7,86.1 782.0,81.9 782.3,87.8 782.7,80.4 783.0,79.1 783.3,79.0 783.7,74.8 784.0,69.6 784.3,67.9 784.7,76.5 785.0,70.4 785.3,69.2 785.7,66.8 786.0,63.5 786.3,66.7 786.7,67.2 787.0,69.4 787.3,67.7 787.7,70.6 788.0,72.8 788.3,74.5 788.7,77.4 789.0,76.8 789.3,73.1 789.7,81.9 790.0,74.2 790.3,81.2 790.7,85.6 791.0,90.0 791.3,88.3 791.7,92.0 792.0,91.9 792.3,89.1 792.7,87.6 793.0,86.1 793.3,79.9 793.7,74.8 794.0,79.7 794.3,69.9 794.7,63.5 795.0,63.5 795.3,65.3 795.7,58.6 796.0,54.3 796.3,50.7 796.7,51.5 797.0,53.4 797.3,60.5 797.7,61.1 798.0,64.0 798.3,66.5 798.7,71.1 799.0,77.7 799.3,83.4 799.7,87.0 800.0,84.2 800.3,90.1 800.7,90.7 801.0,98.7 801.3,98.3 801.7,103.2 802.0,101.3 802.3,100.1 802.7,98.9 803.0,88.3 803.3,86.9 803.7,84.6 804.0,86.5 804.3,79.6 804.7,79.2 805.0,69.8 805.3,65.9 805.7,59.6 806.0,59.8 806.3,59.1 806.7,57.7 807.0,54.0 807.3,56.4 807.7,64.7 808.0,63.0 808.3,64.0 808.7,64.2 809.0,68.1 809.3,72.5 809.7,75.9 810.0,83.2 810.3,88.6 810.7,85.4 811.0,94.1 811.3,90.2 811.7,98.4 812.0,103.4 812.3,103.3 812.7,99.0 813.0,99.4 813.3,99.9 813.7,96.5 814.0,95.6 814.3,94.9 814.7,94.3 815.0,90.3 815.3,90.1 815.7,89.0 816.0,88.1 816.3,91.3 816.7,86.6 817.0,81.8 817.3,88.6 817.7,85.4 818.0,81.1 818.3,79.3 818.7,73.5 819.0,77.3 819.3,83.6 819.7,85.8 820.0,89.3 820.3,96.5 820.7,89.3 821.0,89.4 821.3,83.5 821.7,82.3 822.0,82.6 822.3,89.8 822.7,78.2 823.0,84.0 823.3,74.9 823.7,69.0 824.0,67.6 824.3,68.3 824.7,64.3 825.0,62.6 825.3,58.4 825.7,61.3 826.0,59.3 826.3,51.9 826.7,52.1 827.0,57.2 827.3,57.7 827.7,56.4 828.0,55.2 828.3,63.0 828.7,65.7 829.0,70.6 829.3,71.2 829.7,72.4 830.0,78.4 830.3,82.8 830.7,86.2 831.0,86.5 831.3,94.0 831.7,91.5 832.0,92.6 832.3,95.8 832.7,96.9 833.0,97.3 833.3,93.3 833.7,90.1 834.0,87.4 834.3,86.1 834.7,90.5 835.0,91.0 835.3,89.1 835.7,85.8 836.0,85.5 836.3,79.5 836.7,76.6 837.0,76.2 837.3,75.1 837.7,73.5 838.0,76.4 838.3,77.5 838.7,75.0 839.0,69.4 839.3,69.8 839.7,67.9 840.0,67.1 840.3,77.9 840.7,66.7 841.0,70.0 841.3,68.7 841.7,73.5 842.0,70.2 842.3,73.2 842.7,75.9 843.0,75.6 843.3,79.2 843.7,78.5" fill="none" stroke="#ff00ff" stroke-width="0.9"/></svg><div class="lbl" style="top:8.5px;left:3.5px">CAIS<br>HHE</div><div class="tm" style="left:136.5px;top:170px">14:30:48.03</div><div class="tm" style="left:304.5px;top:170px">14:31:08.03</div><div class="tm" style="left:472.5px;top:170px">14:31:28.03</div><div class="tm" style="left:640.5px;top:170px">14:31:48.03</div></div>
 <div id="right" class="a">
  
  <div class="etch" style="top:4px"></div>
  <div class="t" style="left:5px;top:10.5px;font:bold 13px 'Liberation Sans',sans-serif">Station: CAIS (4/28)</div>
  <div class="etch" style="top:30px"></div>
  <div class="etch" style="top:35px;border-top-color:#e4e4e4"></div>
  <div class="rl" style="left:5px;top:39px;font-size:7px">Time</div>
  <div class="rl" style="left:5px;top:50px;font-size:7px">Amplitude</div>
  <div class="box" style="left:55px;top:39px;width:52px;height:9px;font-size:7.2px">14:30:29.7410</div>
  <div class="box" style="left:55px;top:50px;width:37px;height:9px;font-size:7.2px">971.4972</div>
  <div class="box" style="left:130px;top:38px;width:45px;height:9px;font-size:7.2px">20/06/2024</div>
  <div class="etch" style="top:62px"></div>
  <div class="etch" style="top:67px;border-top-color:#e4e4e4"></div>
  <div class="rl" style="left:3px;top:75px;font-size:7px">S-P time interval [sec.]</div>
  <div class="rl" style="left:3px;top:88px;font-size:7px">Coda duration [sec.]</div>
  <div class="rl" style="left:3px;top:101px;font-size:7px">Number of waves</div>
  <div class="rl" style="left:3px;top:114px;font-size:7px">Number of phases</div>
  <div class="box" style="left:81px;top:74px;width:25px;height:9px;font-size:7.2px;text-align:center;padding:0">0</div>
  <div class="box" style="left:81px;top:87px;width:25px;height:9px;font-size:7.2px;text-align:center;padding:0">0</div>
  <div class="box" style="left:81px;top:100px;width:25px;height:9px;font-size:7.2px;text-align:center;padding:0">3</div>
  <div class="box" style="left:81px;top:113px;width:25px;height:9px;font-size:7.2px;text-align:center;padding:0">0</div>
  <!-- listview -->
  <div class="a" style="left:0px;top:132px;width:347px;height:196px;background:#fff;border:1px solid #3a3a3a;border-right-color:#6a6a6a;border-bottom-color:#6a6a6a">
   <div class="a" style="left:0;top:0;width:345px;height:14px;border-bottom:1px solid #d8d8d8"></div>
   <div class="a" style="left:47px;top:0;width:1px;height:14px;background:#e5e5e5"></div>
   <div class="a" style="left:94px;top:0;width:1px;height:14px;background:#e5e5e5"></div>
   <div class="a" style="left:128px;top:0;width:1px;height:14px;background:#e5e5e5"></div>
   <div class="a" style="left:154px;top:0;width:1px;height:14px;background:#e5e5e5"></div>
   <div class="rl" style="left:6px;top:4px;font-size:7px;color:#222">Polar</div>
   <div class="rl" style="left:52px;top:4px;font-size:7px;color:#222">Qual</div>
   <div class="rl" style="left:99px;top:4px;font-size:7px;color:#222">Weight</div>
   <div class="rl" style="left:133px;top:4px;font-size:7px;color:#222">Ph</div>
   <div class="rl" style="left:160px;top:4px;font-size:7px;color:#222">Time</div>
   <div class="a" style="left:0;top:183px;width:345px;height:11px;background:#cdcdcd"></div>
   <div class="a" style="left:0;top:183px;width:11px;height:11px;background:#f0f0f0"><svg class="a" style="left:3px;top:3px" width="5" height="6"><path d="M4 0.5L1 3L4 5.5" stroke="#555" fill="none" stroke-width="1.2"/></svg></div>
   <div class="a" style="left:332px;top:183px;width:13px;height:11px;background:#f0f0f0"><svg class="a" style="left:5px;top:3px" width="5" height="6"><path d="M1 0.5L4 3L1 5.5" stroke="#555" fill="none" stroke-width="1.2"/></svg></div>
  </div>
  <!-- property grid -->
  <div class="a" style="left:0px;top:332px;width:347px;height:285px;border-top:1px solid #a0a0a0">
   <div class="a" style="left:0;top:0;width:347px;height:17.3px;background:#f0f0f0"></div>
<div class="a" style="left:2px;top:1px;width:15px;height:15px;background:#cce8ff;border:1px solid #3399ff"><svg class="a" style="left:1px;top:1px" width="12" height="12" viewBox="0 0 12 12"><rect x="1" y="1.5" width="3" height="2" fill="#333"/><rect x="1" y="7.5" width="3" height="2" fill="#333"/><path d="M5 2h6M5 4h6M5 8h6M5 10h6" stroke="#7a9ab8" stroke-width="0.8"/></svg></div>
<svg class="a" style="left:19px;top:2px" width="12" height="14" viewBox="0 0 12 14"><text x="1" y="6" font-family="Liberation Sans" font-size="6" fill="#3a6ac8">A</text><text x="1" y="12.5" font-family="Liberation Sans" font-size="6" fill="#c04020">Z</text><path d="M8.5 1.5V12M6.8 10L8.5 12.5L10.2 10" stroke="#111" stroke-width="0.9" fill="none"/></svg>
<div class="a" style="left:34px;top:2px;width:1px;height:13px;background:#c8c8c8"></div>
<div class="a" style="left:38px;top:3px;width:11px;height:10px;border:1px solid #b0b0b0;background:#e8e8e8"></div>
<div class="a" style="left:0;top:17.3px;width:347px;height:224.3px;background:#fff;border-left:1px solid #a0a0a0"></div>
<div class="a" style="left:0;top:17.30px;width:347px;height:10.71px;background:#a3a3a3"></div>
<svg class="a" style="left:4px;top:20.80px" width="7" height="4"><path d="M0.5 0.5L3.5 3.5L6.5 0.5" stroke="#222" fill="none" stroke-width="1"/></svg>
<div class="t" style="left:17.5px;top:18.20px;font:bold 7.8px 'Liberation Sans',sans-serif;color:#000">General</div>
<div class="a" style="left:0;top:28.01px;width:15px;height:10.71px;background:#a3a3a3"></div>
<div class="a" style="left:15px;top:38.42px;width:332px;height:1px;background:#c8c8c8"></div>
<div class="a" style="left:163px;top:28.01px;width:1px;height:10.71px;background:#c4c4c4"></div>
<div class="t" style="left:18px;top:31.01px;font-size:7px;color:#222">Channel</div>
<div class="t" style="left:165.5px;top:29.41px;font:bold 8.7px 'Liberation Sans',sans-serif;color:#000">HH</div>
<div class="a" style="left:0;top:38.72px;width:15px;height:10.71px;background:#a3a3a3"></div>
<div class="a" style="left:15px;top:49.13px;width:332px;height:1px;background:#c8c8c8"></div>
<div class="a" style="left:163px;top:38.72px;width:1px;height:10.71px;background:#c4c4c4"></div>
<div class="t" style="left:18px;top:41.72px;font-size:7px;color:#222">Component</div>
<div class="t" style="left:165.5px;top:40.12px;font:bold 8.7px 'Liberation Sans',sans-serif;color:#000">Z</div>
<div class="a" style="left:0;top:49.43px;width:15px;height:10.71px;background:#a3a3a3"></div>
<div class="a" style="left:15px;top:59.84px;width:332px;height:1px;background:#c8c8c8"></div>
<div class="a" style="left:163px;top:49.43px;width:1px;height:10.71px;background:#c4c4c4"></div>
<div class="t" style="left:18px;top:52.43px;font-size:7px;color:#222">File name</div>
<div class="t" style="left:165.5px;top:50.83px;font:bold 8.7px 'Liberation Sans',sans-serif;color:#000">\\hew10.int.ingv.it\ewspace\custom_events\20240620</div>
<div class="a" style="left:0;top:60.14px;width:15px;height:10.71px;background:#a3a3a3"></div>
<div class="a" style="left:15px;top:70.55px;width:332px;height:1px;background:#c8c8c8"></div>
<div class="a" style="left:163px;top:60.14px;width:1px;height:10.71px;background:#c4c4c4"></div>
<div class="t" style="left:18px;top:63.14px;font-size:7px;color:#222">Record date</div>
<div class="t" style="left:165.5px;top:61.54px;font:bold 8.7px 'Liberation Sans',sans-serif;color:#000">20/06/2024</div>
<div class="a" style="left:0;top:70.85px;width:15px;height:10.71px;background:#a3a3a3"></div>
<div class="a" style="left:15px;top:81.26px;width:332px;height:1px;background:#c8c8c8"></div>
<div class="a" style="left:163px;top:70.85px;width:1px;height:10.71px;background:#c4c4c4"></div>
<div class="t" style="left:18px;top:73.85px;font-size:7px;color:#222">Record time</div>
<div class="t" style="left:165.5px;top:72.25px;font:bold 8.7px 'Liberation Sans',sans-serif;color:#000">14:29:58.3700</div>
<div class="a" style="left:0;top:81.56px;width:15px;height:10.71px;background:#a3a3a3"></div>
<div class="a" style="left:15px;top:91.97px;width:332px;height:1px;background:#c8c8c8"></div>
<div class="a" style="left:163px;top:81.56px;width:1px;height:10.71px;background:#c4c4c4"></div>
<div class="t" style="left:18px;top:84.56px;font-size:7px;color:#222">Station code</div>
<div class="t" style="left:165.5px;top:82.96px;font:bold 8.7px 'Liberation Sans',sans-serif;color:#000">CAIS</div>
<div class="a" style="left:0;top:92.27px;width:347px;height:10.71px;background:#a3a3a3"></div>
<svg class="a" style="left:4px;top:95.77px" width="7" height="4"><path d="M0.5 0.5L3.5 3.5L6.5 0.5" stroke="#222" fill="none" stroke-width="1"/></svg>
<div class="t" style="left:17.5px;top:93.17px;font:bold 7.8px 'Liberation Sans',sans-serif;color:#000">Signal</div>
<div class="a" style="left:0;top:102.98px;width:15px;height:10.71px;background:#a3a3a3"></div>
<div class="a" style="left:15px;top:102.98px;width:148px;height:10.71px;background:#a3a3a3"></div>
<div class="a" style="left:15px;top:113.39px;width:332px;height:1px;background:#c8c8c8"></div>
<div class="a" style="left:163px;top:102.98px;width:1px;height:10.71px;background:#c4c4c4"></div>
<div class="t" style="left:18px;top:105.98px;font-size:7px;color:#222">Amplitude</div>
<div class="t" style="left:165.5px;top:104.38px;font:bold 8.7px 'Liberation Sans',sans-serif;color:#000">0</div>
<div class="a" style="left:0;top:113.69px;width:15px;height:10.71px;background:#a3a3a3"></div>
<div class="a" style="left:15px;top:124.10px;width:332px;height:1px;background:#c8c8c8"></div>
<div class="a" style="left:163px;top:113.69px;width:1px;height:10.71px;background:#c4c4c4"></div>
<div class="t" style="left:18px;top:116.69px;font-size:7px;color:#222">Duration [sec.]</div>
<div class="t" style="left:165.5px;top:115.09px;font:bold 8.7px 'Liberation Sans',sans-serif;color:#000">0</div>
<div class="a" style="left:0;top:124.40px;width:15px;height:10.71px;background:#a3a3a3"></div>
<div class="a" style="left:15px;top:134.81px;width:332px;height:1px;background:#c8c8c8"></div>
<div class="a" style="left:163px;top:124.40px;width:1px;height:10.71px;background:#c4c4c4"></div>
<div class="t" style="left:18px;top:127.40px;font-size:7px;color:#222">Frequency [Hz]</div>
<div class="t" style="left:165.5px;top:125.80px;font:bold 8.7px 'Liberation Sans',sans-serif;color:#000">100</div>
<div class="a" style="left:0;top:135.11px;width:15px;height:10.71px;background:#a3a3a3"></div>
<div class="a" style="left:15px;top:145.52px;width:332px;height:1px;background:#c8c8c8"></div>
<div class="a" style="left:163px;top:135.11px;width:1px;height:10.71px;background:#c4c4c4"></div>
<div class="t" style="left:18px;top:138.11px;font-size:7px;color:#222">Period [sec.]</div>
<div class="t" style="left:165.5px;top:136.51px;font:bold 8.7px 'Liberation Sans',sans-serif;color:#000">0</div>
<div class="a" style="left:0;top:145.82px;width:15px;height:10.71px;background:#a3a3a3"></div>
<div class="a" style="left:15px;top:156.23px;width:332px;height:1px;background:#c8c8c8"></div>
<div class="a" style="left:163px;top:145.82px;width:1px;height:10.71px;background:#c4c4c4"></div>
<div class="t" style="left:18px;top:148.82px;font-size:7px;color:#222">Samples</div>
<div class="t" style="left:165.5px;top:147.22px;font:bold 8.7px 'Liberation Sans',sans-serif;color:#000">36079</div>
<div class="a" style="left:0;top:156.53px;width:15px;height:10.71px;background:#a3a3a3"></div>
<div class="a" style="left:15px;top:166.94px;width:332px;height:1px;background:#c8c8c8"></div>
<div class="a" style="left:163px;top:156.53px;width:1px;height:10.71px;background:#c4c4c4"></div>
<div class="t" style="left:18px;top:159.53px;font-size:7px;color:#222">Y max</div>
<div class="t" style="left:165.5px;top:157.93px;font:bold 8.7px 'Liberation Sans',sans-serif;color:#000">1187.35876</div>
<div class="a" style="left:0;top:167.24px;width:15px;height:10.71px;background:#a3a3a3"></div>
<div class="a" style="left:15px;top:177.65px;width:332px;height:1px;background:#c8c8c8"></div>
<div class="a" style="left:163px;top:167.24px;width:1px;height:10.71px;background:#c4c4c4"></div>
<div class="t" style="left:18px;top:170.24px;font-size:7px;color:#222">Y min</div>
<div class="t" style="left:165.5px;top:168.64px;font:bold 8.7px 'Liberation Sans',sans-serif;color:#000">-1640.42749</div>
<div class="a" style="left:0;top:241.6px;width:347px;height:1px;background:#a0a0a0"></div>
<div class="a" style="left:0;top:243px;width:347px;height:40px;border:1px solid #a0a0a0;border-right-color:#b8b8b8;background:#f0f0f0"></div>
<div class="t" style="left:4px;top:246.3px;font:bold 7.6px 'Liberation Sans',sans-serif">Amplitude</div>
<div class="t" style="left:4px;top:256.3px;font-size:7px;color:#222">Calculated amplitude</div>

  </div>

 </div>
 <div id="status" class="a">
  <svg class="a" style="left:1189px;top:6px" width="8" height="8"><g fill="#b0b0b0"><rect x="6" y="0" width="1.2" height="1.2"/><rect x="3" y="3" width="1.2" height="1.2"/><rect x="6" y="3" width="1.2" height="1.2"/><rect x="0" y="6" width="1.2" height="1.2"/><rect x="3" y="6" width="1.2" height="1.2"/><rect x="6" y="6" width="1.2" height="1.2"/></g></svg>
  <div class="t" style="left:3.5px;top:5px;font-size:7.8px;color:#222">Grab this phase or press "C" key to delete it.</div>
 </div>
</div>
</body></html>
